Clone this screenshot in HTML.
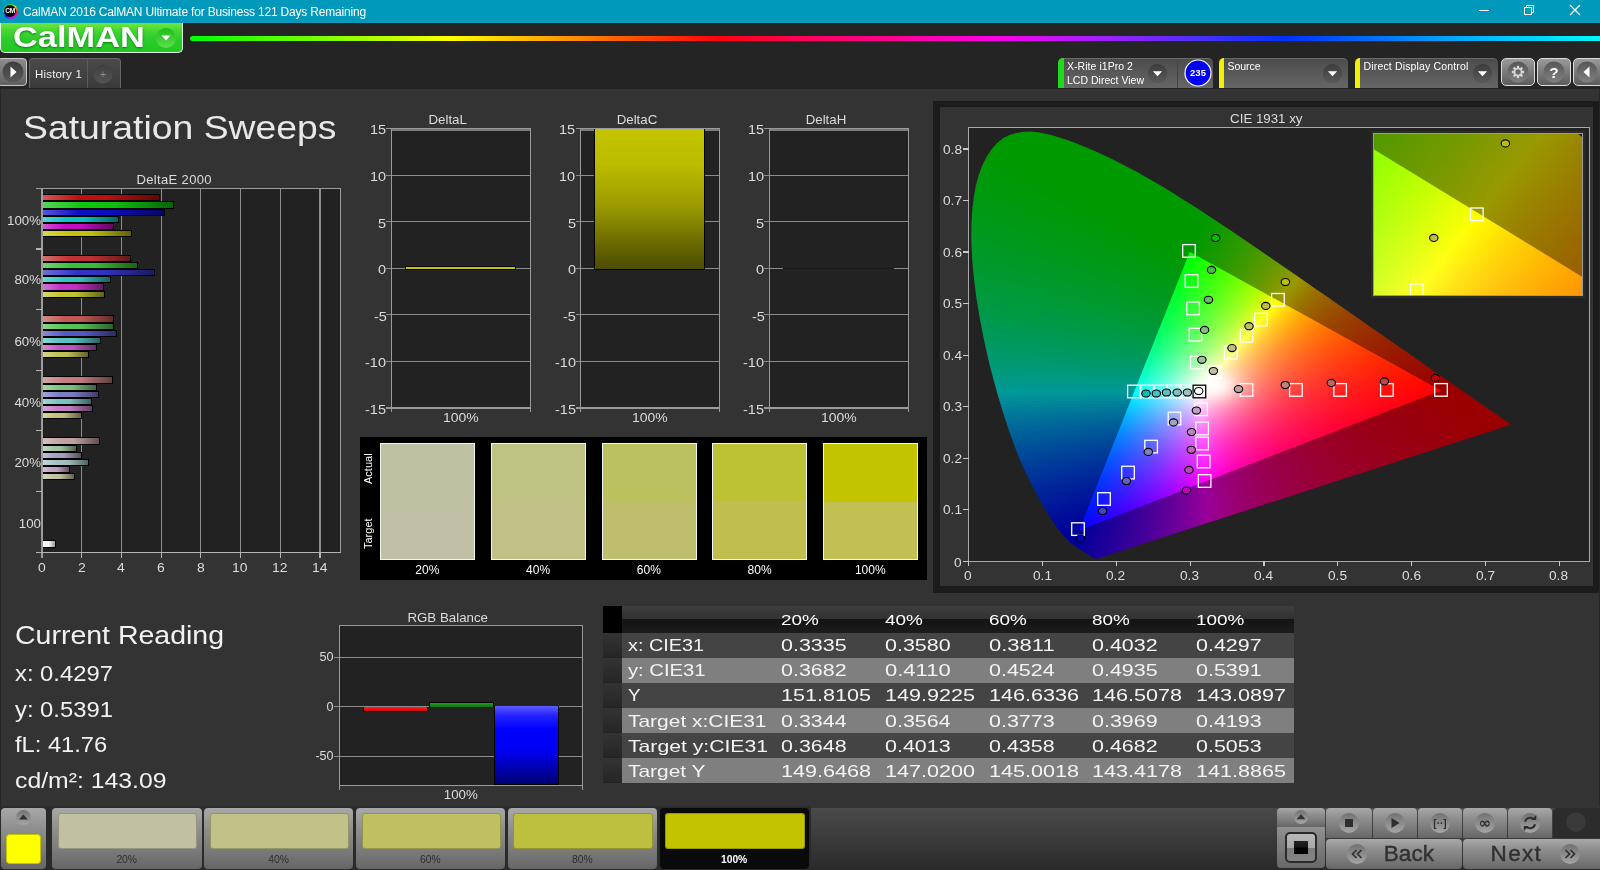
<!DOCTYPE html>
<html lang="en"><head><meta charset="utf-8"><title>CalMAN Saturation Sweeps</title>
<style>
*{box-sizing:border-box;margin:0;padding:0}
html,body{width:1600px;height:870px;overflow:hidden;background:#333}
body{position:relative;font-family:"Liberation Sans",sans-serif;color:#e6e6e6;font-size:13px}
#app{position:absolute;left:0;top:0;width:1600px;height:870px;overflow:hidden;will-change:transform}
.a{position:absolute}
.t{position:absolute;white-space:nowrap;line-height:1}
.cr{overflow:hidden}.cr i{display:block;width:100%}.r2 i{height:2px}.r3 i{height:3px}
</style></head>
<body>
<div id="app">
<!-- sec_top -->
<div class="a" style="left:0px;top:0px;width:1600px;height:23px;background:#0099bc"></div>
<div class="a" style="left:2.7px;top:3.7px;width:15.2px;height:15.2px;border-radius:50%;background:conic-gradient(from 0deg,#20e020,#e0e000 45deg,#ff2020 90deg,#ff00c0 135deg,#a020ff 180deg,#2020ff 225deg,#00d0e0 270deg,#00e060 315deg,#20e020 360deg)"></div>
<div class="a" style="left:4.2px;top:5.2px;width:12.2px;height:12.2px;border-radius:50%;background:#000"></div>
<div class="t" style="left:5.22px;top:8.21px;font-size:6.6px;color:#fff;font-weight:bold;letter-spacing:-0.3px">CM</div>
<div class="t" style="left:23.00px;top:5.64px;font-size:12px;letter-spacing:-0.189px;color:#fff;">CalMAN 2016 CalMAN Ultimate for Business 121 Days Remaining</div>
<svg class="a" style="left:1460px;top:-1px" width="140" height="23" viewBox="0 0 140 23" fill="none" stroke="#fff" stroke-width="1"><path d="M19 11.5h10"/><path d="M64.5 8.5h7v7h-7z M66.5 8.5v-2h7v7h-2"/><path d="M110 6l10 10M120 6l-10 10" stroke-width="1.2"/></svg>
<div class="a" style="left:0px;top:23px;width:1600px;height:65.8px;background:#242424"></div>
<div class="a" style="left:190px;top:35.7px;width:1410px;height:5.1px;background:linear-gradient(90deg,#00ff00 0,#a0ff00 170px,#ffff00 260px,#ff9800 372px,#ff4000 462px,#ff0010 530px,#ff0060 620px,#ff0090 700px,#ff00e8 802px,#a020ff 915px,#5030ff 1005px,#0030ff 1095px,#0060ff 1162px,#00a0ff 1252px,#00f8f8 1410px);border-radius:2.5px 0 0 2.5px"></div>
<div class="a" style="left:0px;top:23px;width:183px;height:30px;background:linear-gradient(180deg,#70e83e 0,#48d834 25%,#2ccc2c 55%,#22c822 100%);border:1px solid #e8ffe8;border-top:none;border-radius:0 0 5px 5px"></div>
<div class="t" style="left:12.60px;top:23.29px;font-size:28.6px;transform:scaleX(1.2024);transform-origin:0 0;color:#fff;font-weight:bold;text-shadow:0 1px 2px #0a7a0a">CalMAN</div>
<svg class="a" style="left:155px;top:27px" width="22" height="22" viewBox="0 0 22 22"><defs><linearGradient id="gb" x1="0" y1="0" x2="0" y2="1"><stop offset="0" stop-color="#1cbc1c"/><stop offset="1" stop-color="#5ee04a"/></linearGradient></defs><circle cx="11" cy="11" r="10" fill="url(#gb)"/><path d="M6.5 8.5h9l-4.5 5z" fill="#fff"/></svg>
<!-- sec_toolbar -->
<svg width="0" height="0" class="a"><defs><linearGradient id="ddg" x1="0" y1="0" x2="0" y2="1"><stop offset="0" stop-color="#3c3c3c"/><stop offset="1" stop-color="#5a5a5a"/></linearGradient><linearGradient id="cbg" x1="0" y1="0" x2="0" y2="1"><stop offset="0" stop-color="#565656"/><stop offset="1" stop-color="#808080"/></linearGradient><radialGradient id="btg" cx=".5" cy=".4" r=".6"><stop offset="0" stop-color="#8a8a8a"/><stop offset="1" stop-color="#5c5c5c"/></radialGradient></defs></svg>
<div class="a" style="left:-3px;top:58px;width:30px;height:28px;background:linear-gradient(180deg,#8c8c8c,#606060);border:1px solid #c8c8c8;border-radius:4px"></div>
<svg class="a" style="left:2px;top:61px" width="22" height="22" viewBox="-11 -11 22 22"><circle r="10.5" fill="url(#ddg)"/><path d="M-2.5 -5.5v11l6-5.5z" fill="#fff"/></svg>
<div class="a" style="left:29px;top:58px;width:92px;height:30px;background:linear-gradient(180deg,#4a4a4a,#3a3a3a);border:1px solid #666;border-bottom:none;border-radius:4px 4px 0 0"></div>
<div class="a" style="left:87px;top:59px;width:1px;height:29px;background:#5c5c5c"></div>
<div class="t" style="left:35.00px;top:68.77px;font-size:11.5px;letter-spacing:0.181px;color:#f0f0f0;">History 1</div>
<svg class="a" style="left:93px;top:64px" width="20" height="20" viewBox="-10 -10 20 20"><circle r="9.5" fill="url(#ddg)" opacity=".8"/></svg>
<div class="t" style="left:99.79px;top:69.19px;font-size:11px;color:#8a8a8a;">+</div>
<div class="a" style="left:1058px;top:58px;width:155px;height:30px;background:linear-gradient(180deg,#4c4c4c,#666);border-radius:5px 5px 0 0;border-top:1px solid #6a6a6a"></div>
<div class="a" style="left:1058px;top:58px;width:6px;height:30px;background:#1fdc1f;border-radius:5px 0 0 0"></div>
<div class="a" style="left:1177px;top:61px;width:1px;height:27px;background:#444"></div>
<div class="t" style="left:1067.00px;top:60.81px;font-size:10.5px;letter-spacing:0.046px;color:#fff;">X-Rite i1Pro 2</div>
<div class="t" style="left:1067.00px;top:74.81px;font-size:10.5px;letter-spacing:0.012px;color:#fff;">LCD Direct View</div>
<svg class="a" style="left:1147.0px;top:62.900000000000006px" width="21.0" height="21.0" viewBox="-10.5 -10.5 21.0 21.0"><circle r="9.5" fill="#4a4a4a"/><circle r="9.5" fill="url(#ddg)"/><path d="M-4.6 -2.2h9.2l-4.6 5z" fill="#fff"/></svg>
<svg class="a" style="left:1183px;top:58px" width="30" height="30" viewBox="-15 -15 30 30"><circle r="13" fill="#0000f0" stroke="#fff" stroke-width="1.2"/><text y="3.2" font-size="9.5" font-weight="bold" fill="#fff" text-anchor="middle" font-family="Liberation Sans, sans-serif">235</text></svg>
<div class="a" style="left:1219px;top:58px;width:129px;height:30px;background:linear-gradient(180deg,#4c4c4c,#666);border-radius:5px 5px 0 0;border-top:1px solid #6a6a6a"></div>
<div class="a" style="left:1219px;top:58px;width:5px;height:30px;background:#f0f000;border-radius:5px 0 0 0"></div>
<div class="t" style="left:1227.50px;top:60.81px;font-size:10.5px;letter-spacing:-0.045px;color:#fff;">Source</div>
<svg class="a" style="left:1322.0px;top:62.900000000000006px" width="21.0" height="21.0" viewBox="-10.5 -10.5 21.0 21.0"><circle r="9.5" fill="#4a4a4a"/><circle r="9.5" fill="url(#ddg)"/><path d="M-4.6 -2.2h9.2l-4.6 5z" fill="#fff"/></svg>
<div class="a" style="left:1355px;top:58px;width:143px;height:30px;background:linear-gradient(180deg,#4c4c4c,#666);border-radius:5px 5px 0 0;border-top:1px solid #6a6a6a"></div>
<div class="a" style="left:1355px;top:58px;width:5px;height:30px;background:#f0f000;border-radius:5px 0 0 0"></div>
<div class="t" style="left:1363.50px;top:60.81px;font-size:10.5px;letter-spacing:0.158px;color:#fff;">Direct Display Control</div>
<svg class="a" style="left:1471.5px;top:63.3px" width="21.0" height="21.0" viewBox="-10.5 -10.5 21.0 21.0"><circle r="9.5" fill="#4a4a4a"/><circle r="9.5" fill="url(#ddg)"/><path d="M-4.6 -2.2h9.2l-4.6 5z" fill="#fff"/></svg>
<div class="a" style="left:1501px;top:58px;width:34px;height:28px;background:linear-gradient(180deg,#9a9a9a,#5c5c5c);border:1px solid #dcdcdc;border-radius:5px"></div>
<div class="a" style="left:1537px;top:58px;width:34px;height:28px;background:linear-gradient(180deg,#9a9a9a,#5c5c5c);border:1px solid #dcdcdc;border-radius:5px"></div>
<div class="a" style="left:1573px;top:58px;width:34px;height:28px;background:linear-gradient(180deg,#9a9a9a,#5c5c5c);border:1px solid #dcdcdc;border-radius:5px"></div>
<svg class="a" style="left:1507px;top:61px" width="22" height="22" viewBox="-11 -11 22 22"><circle r="10.5" fill="url(#cbg)"/></svg>
<svg class="a" style="left:1543px;top:61px" width="22" height="22" viewBox="-11 -11 22 22"><circle r="10.5" fill="url(#cbg)"/></svg>
<svg class="a" style="left:1576px;top:61px" width="22" height="22" viewBox="-11 -11 22 22"><circle r="10.5" fill="url(#cbg)"/></svg>
<svg class="a" style="left:1507px;top:61px" width="22" height="22" viewBox="-11 -11 22 22"><g transform="scale(.9)"><g fill="#d8d8d8"><path d="M-1.6 -4.2L-1 -6.9H1L1.6 -4.2z" transform="rotate(0)"/><path d="M-1.6 -4.2L-1 -6.9H1L1.6 -4.2z" transform="rotate(45)"/><path d="M-1.6 -4.2L-1 -6.9H1L1.6 -4.2z" transform="rotate(90)"/><path d="M-1.6 -4.2L-1 -6.9H1L1.6 -4.2z" transform="rotate(135)"/><path d="M-1.6 -4.2L-1 -6.9H1L1.6 -4.2z" transform="rotate(180)"/><path d="M-1.6 -4.2L-1 -6.9H1L1.6 -4.2z" transform="rotate(225)"/><path d="M-1.6 -4.2L-1 -6.9H1L1.6 -4.2z" transform="rotate(270)"/><path d="M-1.6 -4.2L-1 -6.9H1L1.6 -4.2z" transform="rotate(315)"/></g><circle r="3.9" fill="none" stroke="#d8d8d8" stroke-width="1.8"/></g></svg>
<div class="t" style="left:1549.27px;top:64.98px;font-size:15.5px;color:#fff;font-weight:bold;">?</div>
<svg class="a" style="left:1576px;top:61px" width="22" height="22" viewBox="-11 -11 22 22"><path d="M2.5 -5.5v11l-6-5.5z" fill="#fff"/></svg>
<div class="a" style="left:0px;top:89px;width:1.2px;height:717px;background:#262626"></div>
<div class="a" style="left:1599px;top:89px;width:1px;height:717px;background:#262626"></div>
<!-- sec_left -->
<div class="t" style="left:23.40px;top:111.34px;font-size:33.5px;transform:scaleX(1.1149);transform-origin:0 0;color:#e8e8e8;">Saturation Sweeps</div>
<div class="t" style="left:136.45px;top:172.80px;font-size:13px;letter-spacing:0.359px;color:#dcdcdc;">DeltaE 2000</div>
<div class="a" style="left:42px;top:188px;width:299px;height:365px;background:#222"></div>
<div class="a" style="left:81.1px;top:188px;width:1.3px;height:365px;background:#8c8c8c"></div>
<div class="a" style="left:81.1px;top:553px;width:1.3px;height:5px;background:#b4b4b4"></div>
<div class="a" style="left:120.8px;top:188px;width:1.3px;height:365px;background:#8c8c8c"></div>
<div class="a" style="left:120.8px;top:553px;width:1.3px;height:5px;background:#b4b4b4"></div>
<div class="a" style="left:160.5px;top:188px;width:1.3px;height:365px;background:#8c8c8c"></div>
<div class="a" style="left:160.5px;top:553px;width:1.3px;height:5px;background:#b4b4b4"></div>
<div class="a" style="left:200.2px;top:188px;width:1.3px;height:365px;background:#8c8c8c"></div>
<div class="a" style="left:200.2px;top:553px;width:1.3px;height:5px;background:#b4b4b4"></div>
<div class="a" style="left:239.9px;top:188px;width:1.3px;height:365px;background:#8c8c8c"></div>
<div class="a" style="left:239.9px;top:553px;width:1.3px;height:5px;background:#b4b4b4"></div>
<div class="a" style="left:279.6px;top:188px;width:1.3px;height:365px;background:#8c8c8c"></div>
<div class="a" style="left:279.6px;top:553px;width:1.3px;height:5px;background:#b4b4b4"></div>
<div class="a" style="left:319.3px;top:188px;width:1.3px;height:365px;background:#8c8c8c"></div>
<div class="a" style="left:319.3px;top:553px;width:1.3px;height:5px;background:#b4b4b4"></div>
<div class="a" style="left:41px;top:188px;width:2px;height:370px;background:#9c9c9c"></div>
<div class="a" style="left:36px;top:188px;width:305px;height:1.2px;background:#9c9c9c"></div>
<div class="a" style="left:340px;top:188px;width:1.2px;height:365px;background:#9c9c9c"></div>
<div class="a" style="left:36px;top:552px;width:305px;height:1.3px;background:#b4b4b4"></div>
<div class="a" style="left:36px;top:248.4px;width:6px;height:1.3px;background:#b4b4b4"></div>
<div class="a" style="left:36px;top:309.0px;width:6px;height:1.3px;background:#b4b4b4"></div>
<div class="a" style="left:36px;top:369.6px;width:6px;height:1.3px;background:#b4b4b4"></div>
<div class="a" style="left:36px;top:430.2px;width:6px;height:1.3px;background:#b4b4b4"></div>
<div class="a" style="left:36px;top:490.8px;width:6px;height:1.3px;background:#b4b4b4"></div>
<div class="t" style="left:6.99px;top:214.00px;font-size:13.3px;color:#dcdcdc;">100%</div>
<div class="a" style="left:43px;top:194.2px;width:116.6px;height:7.3px;background:linear-gradient(90deg,#d65656 0,#c40e0e 30%,#be0e0e 55%,#620707 100%);border:1px solid #000;border-left:none"></div>
<div class="a" style="left:43px;top:201.3px;width:130.5px;height:7.3px;background:linear-gradient(90deg,#56d656 0,#0ec40e 30%,#0ebe0e 55%,#076207 100%);border:1px solid #000;border-left:none"></div>
<div class="a" style="left:43px;top:208.5px;width:121.6px;height:7.3px;background:linear-gradient(90deg,#5656d6 0,#0e0ec4 30%,#0e0ebe 55%,#070762 100%);border:1px solid #000;border-left:none"></div>
<div class="a" style="left:43px;top:215.7px;width:75.5px;height:7.3px;background:linear-gradient(90deg,#56d6d6 0,#0ec4c4 30%,#0ebebe 55%,#076262 100%);border:1px solid #000;border-left:none"></div>
<div class="a" style="left:43px;top:222.8px;width:70.6px;height:7.3px;background:linear-gradient(90deg,#d656d6 0,#c40ec4 30%,#be0ebe 55%,#620762 100%);border:1px solid #000;border-left:none"></div>
<div class="a" style="left:43px;top:229.9px;width:89.4px;height:7.3px;background:linear-gradient(90deg,#d6d656 0,#c4c40e 30%,#bebe0e 55%,#626207 100%);border:1px solid #000;border-left:none"></div>
<div class="t" style="left:14.39px;top:273.30px;font-size:13.3px;color:#dcdcdc;">80%</div>
<div class="a" style="left:43px;top:254.8px;width:87.8px;height:7.3px;background:linear-gradient(90deg,#d67070 0,#c43333 30%,#be3232 55%,#621a1a 100%);border:1px solid #000;border-left:none"></div>
<div class="a" style="left:43px;top:261.9px;width:94.8px;height:7.3px;background:linear-gradient(90deg,#70d670 0,#33c433 30%,#32be32 55%,#1a621a 100%);border:1px solid #000;border-left:none"></div>
<div class="a" style="left:43px;top:269.1px;width:111.7px;height:7.3px;background:linear-gradient(90deg,#7070d6 0,#3333c4 30%,#3232be 55%,#1a1a62 100%);border:1px solid #000;border-left:none"></div>
<div class="a" style="left:43px;top:276.2px;width:68.2px;height:7.3px;background:linear-gradient(90deg,#70d6d6 0,#33c4c4 30%,#32bebe 55%,#1a6262 100%);border:1px solid #000;border-left:none"></div>
<div class="a" style="left:43px;top:283.4px;width:60.6px;height:7.3px;background:linear-gradient(90deg,#d670d6 0,#c433c4 30%,#be32be 55%,#621a62 100%);border:1px solid #000;border-left:none"></div>
<div class="a" style="left:43px;top:290.6px;width:61.6px;height:7.3px;background:linear-gradient(90deg,#d6d670 0,#c4c433 30%,#bebe32 55%,#62621a 100%);border:1px solid #000;border-left:none"></div>
<div class="t" style="left:14.39px;top:335.20px;font-size:13.3px;color:#dcdcdc;">60%</div>
<div class="a" style="left:43px;top:315.4px;width:70.8px;height:7.3px;background:linear-gradient(90deg,#d68a8a 0,#c45858 30%,#be5656 55%,#622c2c 100%);border:1px solid #000;border-left:none"></div>
<div class="a" style="left:43px;top:322.6px;width:70.8px;height:7.3px;background:linear-gradient(90deg,#8ad68a 0,#58c458 30%,#56be56 55%,#2c622c 100%);border:1px solid #000;border-left:none"></div>
<div class="a" style="left:43px;top:329.7px;width:73.9px;height:7.3px;background:linear-gradient(90deg,#8a8ad6 0,#5858c4 30%,#5656be 55%,#2c2c62 100%);border:1px solid #000;border-left:none"></div>
<div class="a" style="left:43px;top:336.9px;width:57.9px;height:7.3px;background:linear-gradient(90deg,#8ad6d6 0,#58c4c4 30%,#56bebe 55%,#2c6262 100%);border:1px solid #000;border-left:none"></div>
<div class="a" style="left:43px;top:344.0px;width:53.9px;height:7.3px;background:linear-gradient(90deg,#d68ad6 0,#c458c4 30%,#be56be 55%,#622c62 100%);border:1px solid #000;border-left:none"></div>
<div class="a" style="left:43px;top:351.2px;width:46.1px;height:7.3px;background:linear-gradient(90deg,#d6d68a 0,#c4c458 30%,#bebe56 55%,#62622c 100%);border:1px solid #000;border-left:none"></div>
<div class="t" style="left:14.39px;top:396.20px;font-size:13.3px;color:#dcdcdc;">40%</div>
<div class="a" style="left:43px;top:376.3px;width:70.0px;height:7.3px;background:linear-gradient(90deg,#d6a5a5 0,#c47e7e 30%,#be7a7a 55%,#623f3f 100%);border:1px solid #000;border-left:none"></div>
<div class="a" style="left:43px;top:383.5px;width:53.7px;height:7.3px;background:linear-gradient(90deg,#a5d6a5 0,#7ec47e 30%,#7abe7a 55%,#3f623f 100%);border:1px solid #000;border-left:none"></div>
<div class="a" style="left:43px;top:390.6px;width:55.9px;height:7.3px;background:linear-gradient(90deg,#a5a5d6 0,#7e7ec4 30%,#7a7abe 55%,#3f3f62 100%);border:1px solid #000;border-left:none"></div>
<div class="a" style="left:43px;top:397.8px;width:48.7px;height:7.3px;background:linear-gradient(90deg,#a5d6d6 0,#7ec4c4 30%,#7abebe 55%,#3f6262 100%);border:1px solid #000;border-left:none"></div>
<div class="a" style="left:43px;top:404.9px;width:49.7px;height:7.3px;background:linear-gradient(90deg,#d6a5d6 0,#c47ec4 30%,#be7abe 55%,#623f62 100%);border:1px solid #000;border-left:none"></div>
<div class="a" style="left:43px;top:412.1px;width:38.8px;height:7.3px;background:linear-gradient(90deg,#d6d6a5 0,#c4c47e 30%,#bebe7a 55%,#62623f 100%);border:1px solid #000;border-left:none"></div>
<div class="t" style="left:14.39px;top:456.20px;font-size:13.3px;color:#dcdcdc;">20%</div>
<div class="a" style="left:43px;top:437.4px;width:56.9px;height:7.3px;background:linear-gradient(90deg,#d6bfbf 0,#c4a3a3 30%,#be9e9e 55%,#625151 100%);border:1px solid #000;border-left:none"></div>
<div class="a" style="left:43px;top:444.6px;width:34.2px;height:7.3px;background:linear-gradient(90deg,#bfd6bf 0,#a3c4a3 30%,#9ebe9e 55%,#516251 100%);border:1px solid #000;border-left:none"></div>
<div class="a" style="left:43px;top:451.7px;width:38.8px;height:7.3px;background:linear-gradient(90deg,#bfbfd6 0,#a3a3c4 30%,#9e9ebe 55%,#515162 100%);border:1px solid #000;border-left:none"></div>
<div class="a" style="left:43px;top:458.9px;width:45.9px;height:7.3px;background:linear-gradient(90deg,#bfd6d6 0,#a3c4c4 30%,#9ebebe 55%,#516262 100%);border:1px solid #000;border-left:none"></div>
<div class="a" style="left:43px;top:466.0px;width:26.5px;height:7.3px;background:linear-gradient(90deg,#d6bfd6 0,#c4a3c4 30%,#be9ebe 55%,#625162 100%);border:1px solid #000;border-left:none"></div>
<div class="a" style="left:43px;top:473.2px;width:32.1px;height:7.3px;background:linear-gradient(90deg,#d6d6bf 0,#c4c4a3 30%,#bebe9e 55%,#626251 100%);border:1px solid #000;border-left:none"></div>
<div class="t" style="left:18.81px;top:517.00px;font-size:13.3px;color:#dcdcdc;">100</div>
<div class="a" style="left:43px;top:540.4px;width:12.8px;height:7.3px;background:linear-gradient(90deg,#fff 0,#f4f4f4 50%,#9a9a9a 100%);border:1px solid #000;border-left:none"></div>
<div class="t" style="left:37.83px;top:561.94px;font-size:12px;transform:scaleX(1.1600);transform-origin:0 0;color:#dcdcdc;">0</div>
<div class="t" style="left:77.53px;top:561.94px;font-size:12px;transform:scaleX(1.1600);transform-origin:0 0;color:#dcdcdc;">2</div>
<div class="t" style="left:117.23px;top:561.94px;font-size:12px;transform:scaleX(1.1600);transform-origin:0 0;color:#dcdcdc;">4</div>
<div class="t" style="left:156.93px;top:561.94px;font-size:12px;transform:scaleX(1.1600);transform-origin:0 0;color:#dcdcdc;">6</div>
<div class="t" style="left:196.63px;top:561.94px;font-size:12px;transform:scaleX(1.1600);transform-origin:0 0;color:#dcdcdc;">8</div>
<div class="t" style="left:232.46px;top:561.94px;font-size:12px;transform:scaleX(1.1600);transform-origin:0 0;color:#dcdcdc;">10</div>
<div class="t" style="left:272.16px;top:561.94px;font-size:12px;transform:scaleX(1.1600);transform-origin:0 0;color:#dcdcdc;">12</div>
<div class="t" style="left:311.86px;top:561.94px;font-size:12px;transform:scaleX(1.1600);transform-origin:0 0;color:#dcdcdc;">14</div>
<!-- sec_delta -->
<div class="a" style="left:391.4px;top:128px;width:139px;height:280px;background:#222"></div>
<div class="a" style="left:386.4px;top:127.9px;width:144px;height:1.3px;background:#9a9a9a"></div>
<div class="t" style="left:370.28px;top:123.44px;font-size:13.3px;transform:scaleX(1.0900);transform-origin:0 0;color:#dcdcdc;">15</div>
<div class="a" style="left:386.4px;top:174.5px;width:144px;height:1.3px;background:#8c8c8c"></div>
<div class="t" style="left:370.28px;top:170.02px;font-size:13.3px;transform:scaleX(1.0900);transform-origin:0 0;color:#dcdcdc;">10</div>
<div class="a" style="left:386.4px;top:221.1px;width:144px;height:1.3px;background:#8c8c8c"></div>
<div class="t" style="left:378.34px;top:216.61px;font-size:13.3px;transform:scaleX(1.0900);transform-origin:0 0;color:#dcdcdc;">5</div>
<div class="a" style="left:386.4px;top:267.6px;width:144px;height:1.3px;background:#8c8c8c"></div>
<div class="t" style="left:378.34px;top:263.19px;font-size:13.3px;transform:scaleX(1.0900);transform-origin:0 0;color:#dcdcdc;">0</div>
<div class="a" style="left:386.4px;top:314.2px;width:144px;height:1.3px;background:#8c8c8c"></div>
<div class="t" style="left:373.51px;top:309.77px;font-size:13.3px;transform:scaleX(1.0900);transform-origin:0 0;color:#dcdcdc;">-5</div>
<div class="a" style="left:386.4px;top:360.8px;width:144px;height:1.3px;background:#8c8c8c"></div>
<div class="t" style="left:365.45px;top:356.36px;font-size:13.3px;transform:scaleX(1.0900);transform-origin:0 0;color:#dcdcdc;">-10</div>
<div class="a" style="left:386.4px;top:407.4px;width:144px;height:1.3px;background:#9a9a9a"></div>
<div class="t" style="left:365.45px;top:402.94px;font-size:13.3px;transform:scaleX(1.0900);transform-origin:0 0;color:#dcdcdc;">-15</div>
<div class="a" style="left:391.4px;top:129.2px;width:139px;height:1.8px;background:#7c7c7c"></div>
<div class="a" style="left:390.79999999999995px;top:128px;width:1.3px;height:284px;background:#9a9a9a"></div>
<div class="a" style="left:529.8px;top:128px;width:1.3px;height:284px;background:#9a9a9a"></div>
<div class="t" style="left:428.48px;top:113.14px;font-size:13.3px;color:#dcdcdc;">DeltaL</div>
<div class="t" style="left:443.05px;top:411.24px;font-size:13.3px;transform:scaleX(1.0500);transform-origin:0 0;color:#dcdcdc;">100%</div>
<div class="a" style="left:405px;top:266px;width:111px;height:4px;background:#c0c018;border:1px solid #0a0a0a"></div>
<div class="a" style="left:580.6px;top:128px;width:139px;height:280px;background:#222"></div>
<div class="a" style="left:575.6px;top:127.9px;width:144px;height:1.3px;background:#9a9a9a"></div>
<div class="t" style="left:559.48px;top:123.44px;font-size:13.3px;transform:scaleX(1.0900);transform-origin:0 0;color:#dcdcdc;">15</div>
<div class="a" style="left:575.6px;top:174.5px;width:144px;height:1.3px;background:#8c8c8c"></div>
<div class="t" style="left:559.48px;top:170.02px;font-size:13.3px;transform:scaleX(1.0900);transform-origin:0 0;color:#dcdcdc;">10</div>
<div class="a" style="left:575.6px;top:221.1px;width:144px;height:1.3px;background:#8c8c8c"></div>
<div class="t" style="left:567.54px;top:216.61px;font-size:13.3px;transform:scaleX(1.0900);transform-origin:0 0;color:#dcdcdc;">5</div>
<div class="a" style="left:575.6px;top:267.6px;width:144px;height:1.3px;background:#8c8c8c"></div>
<div class="t" style="left:567.54px;top:263.19px;font-size:13.3px;transform:scaleX(1.0900);transform-origin:0 0;color:#dcdcdc;">0</div>
<div class="a" style="left:575.6px;top:314.2px;width:144px;height:1.3px;background:#8c8c8c"></div>
<div class="t" style="left:562.71px;top:309.77px;font-size:13.3px;transform:scaleX(1.0900);transform-origin:0 0;color:#dcdcdc;">-5</div>
<div class="a" style="left:575.6px;top:360.8px;width:144px;height:1.3px;background:#8c8c8c"></div>
<div class="t" style="left:554.65px;top:356.36px;font-size:13.3px;transform:scaleX(1.0900);transform-origin:0 0;color:#dcdcdc;">-10</div>
<div class="a" style="left:575.6px;top:407.4px;width:144px;height:1.3px;background:#9a9a9a"></div>
<div class="t" style="left:554.65px;top:402.94px;font-size:13.3px;transform:scaleX(1.0900);transform-origin:0 0;color:#dcdcdc;">-15</div>
<div class="a" style="left:580.6px;top:129.2px;width:139px;height:1.8px;background:#7c7c7c"></div>
<div class="a" style="left:580.0px;top:128px;width:1.3px;height:284px;background:#9a9a9a"></div>
<div class="a" style="left:719.0px;top:128px;width:1.3px;height:284px;background:#9a9a9a"></div>
<div class="t" style="left:616.68px;top:113.14px;font-size:13.3px;color:#dcdcdc;">DeltaC</div>
<div class="t" style="left:632.25px;top:411.24px;font-size:13.3px;transform:scaleX(1.0500);transform-origin:0 0;color:#dcdcdc;">100%</div>
<div class="a" style="left:594.3px;top:128.5px;width:110.6px;height:141px;background:linear-gradient(180deg,#c3c300 0,#bcbc00 25%,#9a9a00 55%,#585800 92%,#4c4c00 100%);border:1.2px solid #000;border-top:none"></div>
<div class="a" style="left:769.4px;top:128px;width:139px;height:280px;background:#222"></div>
<div class="a" style="left:764.4px;top:127.9px;width:144px;height:1.3px;background:#9a9a9a"></div>
<div class="t" style="left:748.28px;top:123.44px;font-size:13.3px;transform:scaleX(1.0900);transform-origin:0 0;color:#dcdcdc;">15</div>
<div class="a" style="left:764.4px;top:174.5px;width:144px;height:1.3px;background:#8c8c8c"></div>
<div class="t" style="left:748.28px;top:170.02px;font-size:13.3px;transform:scaleX(1.0900);transform-origin:0 0;color:#dcdcdc;">10</div>
<div class="a" style="left:764.4px;top:221.1px;width:144px;height:1.3px;background:#8c8c8c"></div>
<div class="t" style="left:756.34px;top:216.61px;font-size:13.3px;transform:scaleX(1.0900);transform-origin:0 0;color:#dcdcdc;">5</div>
<div class="a" style="left:764.4px;top:267.6px;width:144px;height:1.3px;background:#8c8c8c"></div>
<div class="t" style="left:756.34px;top:263.19px;font-size:13.3px;transform:scaleX(1.0900);transform-origin:0 0;color:#dcdcdc;">0</div>
<div class="a" style="left:764.4px;top:314.2px;width:144px;height:1.3px;background:#8c8c8c"></div>
<div class="t" style="left:751.51px;top:309.77px;font-size:13.3px;transform:scaleX(1.0900);transform-origin:0 0;color:#dcdcdc;">-5</div>
<div class="a" style="left:764.4px;top:360.8px;width:144px;height:1.3px;background:#8c8c8c"></div>
<div class="t" style="left:743.45px;top:356.36px;font-size:13.3px;transform:scaleX(1.0900);transform-origin:0 0;color:#dcdcdc;">-10</div>
<div class="a" style="left:764.4px;top:407.4px;width:144px;height:1.3px;background:#9a9a9a"></div>
<div class="t" style="left:743.45px;top:402.94px;font-size:13.3px;transform:scaleX(1.0900);transform-origin:0 0;color:#dcdcdc;">-15</div>
<div class="a" style="left:769.4px;top:129.2px;width:139px;height:1.8px;background:#7c7c7c"></div>
<div class="a" style="left:768.8px;top:128px;width:1.3px;height:284px;background:#9a9a9a"></div>
<div class="a" style="left:907.8px;top:128px;width:1.3px;height:284px;background:#9a9a9a"></div>
<div class="t" style="left:805.68px;top:113.14px;font-size:13.3px;color:#dcdcdc;">DeltaH</div>
<div class="t" style="left:821.05px;top:411.24px;font-size:13.3px;transform:scaleX(1.0500);transform-origin:0 0;color:#dcdcdc;">100%</div>
<div class="a" style="left:783px;top:268.3px;width:111px;height:1.2px;background:#1a1a1a"></div>
<!-- sec_swatch -->
<div class="a" style="left:360px;top:437px;width:567px;height:142.5px;background:#000"></div>
<div class="a" style="left:380.0px;top:443.4px;width:95.2px;height:117px;background:linear-gradient(180deg,#bec1a2 0,#bec1a2 50.2%,#c0c0a4 50.2%,#c0c0a4 100%);border:1px solid #f4f4f4"></div>
<div class="t" style="left:415.29px;top:563.84px;font-size:12px;color:#fff;">20%</div>
<div class="a" style="left:490.8px;top:443.4px;width:95.2px;height:117px;background:linear-gradient(180deg,#bec383 0,#bec383 50.2%,#c1c086 50.2%,#c1c086 100%);border:1px solid #f4f4f4"></div>
<div class="t" style="left:526.04px;top:563.84px;font-size:12px;color:#fff;">40%</div>
<div class="a" style="left:601.5px;top:443.4px;width:95.2px;height:117px;background:linear-gradient(180deg,#bcc160 0,#bcc160 50.2%,#bfbe6c 50.2%,#bfbe6c 100%);border:1px solid #f4f4f4"></div>
<div class="t" style="left:636.79px;top:563.84px;font-size:12px;color:#fff;">60%</div>
<div class="a" style="left:712.2px;top:443.4px;width:95.2px;height:117px;background:linear-gradient(180deg,#bcc234 0,#bcc234 50.2%,#c1be50 50.2%,#c1be50 100%);border:1px solid #f4f4f4"></div>
<div class="t" style="left:747.54px;top:563.84px;font-size:12px;color:#fff;">80%</div>
<div class="a" style="left:823.0px;top:443.4px;width:95.2px;height:117px;background:linear-gradient(180deg,#c3c400 0,#c3c400 50.2%,#c2c054 50.2%,#c2c054 100%);border:1px solid #f4f4f4"></div>
<div class="t" style="left:854.95px;top:563.84px;font-size:12px;color:#fff;">100%</div>
<div class="t" style="left:362.7px;top:453px;width:12px;height:31px;font-size:11px;color:#fff;writing-mode:vertical-rl;transform:rotate(180deg)">Actual</div>
<div class="t" style="left:362.7px;top:518px;width:12px;height:31px;font-size:11px;color:#fff;writing-mode:vertical-rl;transform:rotate(180deg)">Target</div>
<!-- sec_cie -->
<div class="a" style="left:933px;top:101.2px;width:666px;height:491.6px;background:#1b1b1b"></div>
<div class="a" style="left:940px;top:107px;width:652.8px;height:479.2px;background:#333"></div>
<div class="t" style="left:1230.08px;top:111.74px;font-size:13.3px;color:#dcdcdc;">CIE 1931 xy</div>
<div class="a" style="left:968px;top:127px;width:622px;height:435px;background:#222"></div>
<div class="a cr r3" style="left:968px;top:128px;width:622px;height:434px;clip-path:polygon(129.1px 430.7px,129.0px 430.7px,129.0px 430.7px,128.9px 430.8px,128.9px 430.8px,128.8px 430.8px,128.7px 430.8px,128.6px 430.8px,128.5px 430.8px,128.4px 430.8px,128.3px 430.8px,128.1px 430.8px,128.0px 430.8px,127.8px 430.8px,127.5px 430.8px,127.3px 430.7px,127.1px 430.7px,126.9px 430.6px,126.7px 430.5px,126.5px 430.4px,126.3px 430.3px,126.0px 430.2px,125.8px 430.1px,125.5px 429.9px,125.2px 429.7px,124.9px 429.6px,124.5px 429.3px,124.2px 429.1px,123.8px 428.9px,123.3px 428.6px,122.9px 428.3px,122.4px 428.0px,121.9px 427.7px,121.4px 427.3px,120.8px 427.0px,120.2px 426.6px,119.5px 426.2px,118.7px 425.7px,117.9px 425.3px,117.1px 424.7px,116.1px 424.2px,115.2px 423.6px,114.2px 423.0px,113.1px 422.3px,112.0px 421.6px,110.8px 420.8px,109.6px 420.0px,108.2px 419.0px,106.8px 418.0px,105.4px 416.9px,103.9px 415.7px,102.3px 414.4px,100.6px 412.7px,98.7px 410.8px,96.6px 408.7px,94.5px 406.3px,92.1px 403.5px,89.7px 400.4px,87.1px 396.9px,84.4px 393.1px,81.4px 388.6px,78.3px 383.5px,75.1px 378.0px,71.6px 371.8px,67.9px 364.9px,64.0px 357.3px,59.8px 349.0px,55.5px 339.9px,51.2px 329.9px,46.9px 319.0px,42.6px 307.2px,38.3px 294.6px,34.0px 281.3px,29.8px 267.1px,25.6px 252.0px,21.5px 236.4px,17.9px 220.7px,14.5px 204.6px,11.4px 188.2px,8.7px 171.8px,6.6px 155.9px,4.9px 140.3px,3.8px 124.9px,3.2px 110.0px,3.4px 95.9px,4.2px 82.5px,5.7px 69.6px,7.9px 57.6px,10.8px 46.8px,14.4px 37.1px,18.8px 28.5px,23.8px 21.0px,29.2px 14.9px,35.1px 10.3px,41.6px 7.1px,48.4px 4.9px,55.4px 3.7px,62.5px 3.4px,69.9px 4.3px,77.4px 5.8px,84.8px 7.6px,92.3px 9.7px,99.9px 12.3px,107.4px 15.1px,114.7px 18.1px,121.9px 21.0px,129.0px 24.1px,136.0px 27.3px,143.0px 30.6px,149.8px 34.0px,156.6px 37.4px,163.3px 41.0px,170.1px 44.6px,176.8px 48.4px,183.5px 52.2px,190.1px 56.1px,196.8px 60.1px,203.4px 64.1px,210.0px 68.2px,216.6px 72.4px,223.2px 76.6px,229.8px 80.8px,236.4px 85.1px,243.0px 89.4px,249.6px 93.8px,256.2px 98.2px,262.8px 102.6px,269.4px 107.1px,276.0px 111.5px,282.6px 116.0px,289.2px 120.5px,295.8px 125.0px,302.3px 129.5px,308.9px 134.0px,315.4px 138.5px,322.0px 143.0px,328.5px 147.5px,334.9px 152.0px,341.4px 156.4px,347.8px 160.9px,354.1px 165.3px,360.4px 169.6px,366.6px 174.0px,372.8px 178.3px,379.0px 182.6px,385.1px 186.8px,391.1px 191.0px,397.0px 195.1px,402.8px 199.2px,408.6px 203.2px,414.3px 207.1px,419.8px 211.0px,425.3px 214.7px,430.6px 218.4px,435.8px 222.1px,440.9px 225.6px,445.7px 229.0px,450.4px 232.3px,454.9px 235.4px,459.3px 238.4px,463.5px 241.4px,467.7px 244.2px,471.7px 247.0px,475.5px 249.7px,479.2px 252.2px,482.7px 254.7px,486.0px 256.9px,489.2px 259.1px,492.2px 261.2px,495.1px 263.2px,497.8px 265.1px,500.3px 266.9px,502.8px 268.6px,505.0px 270.2px,507.2px 271.7px,509.2px 273.1px,511.2px 274.4px,513.0px 275.7px,514.7px 276.9px,516.3px 278.0px,517.9px 279.1px,519.4px 280.1px,520.7px 281.1px,522.0px 282.0px,523.3px 282.8px,524.5px 283.7px,525.6px 284.5px,526.7px 285.3px,527.8px 286.0px,528.8px 286.7px,529.7px 287.3px,530.6px 288.0px,531.5px 288.6px,532.3px 289.1px,533.1px 289.6px,533.8px 290.1px,534.4px 290.6px,535.1px 291.0px,535.6px 291.4px,536.2px 291.8px,536.7px 292.1px,537.1px 292.5px,537.6px 292.8px,538.0px 293.0px,538.3px 293.3px,538.6px 293.5px,538.9px 293.7px,539.1px 293.9px,539.6px 294.2px,540.4px 294.7px,541.4px 295.4px,542.4px 296.1px,543.1px 296.6px)"><i></i><i style="background:linear-gradient(90deg,#009900 43.5px,#009900 81.5px)"></i><i style="background:linear-gradient(90deg,#009900 35.5px,#009900 92.5px)"></i><i style="background:linear-gradient(90deg,#009900 30.5px,#009900 102.5px)"></i><i style="background:linear-gradient(90deg,#009900 27.5px,#009900 109.5px)"></i><i style="background:linear-gradient(90deg,#009900 24.5px,#009900 117.5px)"></i><i style="background:linear-gradient(90deg,#009902 21.5px,#009900 124.5px)"></i><i style="background:linear-gradient(90deg,#009903 19.5px,#009900 35.5px,#009900 131.5px)"></i><i style="background:linear-gradient(90deg,#009904 17.5px,#009900 41.5px,#009900 138.5px)"></i><i style="background:linear-gradient(90deg,#009905 16.5px,#009900 46.5px,#009900 144.5px)"></i><i style="background:linear-gradient(90deg,#009906 14.5px,#009900 51.5px,#009900 150.5px)"></i><i style="background:linear-gradient(90deg,#009907 12.5px,#009900 57.5px,#009900 156.5px)"></i><i style="background:linear-gradient(90deg,#009908 11.5px,#009900 62.5px,#009900 162.5px)"></i><i style="background:linear-gradient(90deg,#009909 10.5px,#009900 68.5px,#009900 168.5px)"></i><i style="background:linear-gradient(90deg,#00990a 9.5px,#009900 73.5px,#009900 173.5px)"></i><i style="background:linear-gradient(90deg,#00990b 8.5px,#009900 79.5px,#009900 179.5px)"></i><i style="background:linear-gradient(90deg,#00990c 7.5px,#009900 84.5px,#009900 184.5px)"></i><i style="background:linear-gradient(90deg,#00990d 6.5px,#009900 90.5px,#009900 189.5px)"></i><i style="background:linear-gradient(90deg,#00990e 6.5px,#009900 95.5px,#009900 194.5px)"></i><i style="background:linear-gradient(90deg,#00990f 5.5px,#009900 101.5px,#009900 199.5px)"></i><i style="background:linear-gradient(90deg,#009910 4.5px,#009900 106.5px,#009900 204.5px)"></i><i style="background:linear-gradient(90deg,#009911 4.5px,#009900 111.5px,#009900 209.5px)"></i><i style="background:linear-gradient(90deg,#009912 3.5px,#009900 117.5px,#009900 214.5px)"></i><i style="background:linear-gradient(90deg,#009913 3.5px,#009900 122.5px,#009900 219.5px)"></i><i style="background:linear-gradient(90deg,#009914 3.5px,#009900 128.5px,#009900 223.5px)"></i><i style="background:linear-gradient(90deg,#009915 2.5px,#009900 133.5px,#009900 228.5px)"></i><i style="background:linear-gradient(90deg,#009916 2.5px,#009900 139.5px,#009900 233.5px)"></i><i style="background:linear-gradient(90deg,#009917 2.5px,#009900 144.5px,#009900 237.5px)"></i><i style="background:linear-gradient(90deg,#009918 1.5px,#009900 150.5px,#009900 237.5px,#049900 242.5px)"></i><i style="background:linear-gradient(90deg,#00991a 1.5px,#009900 155.5px,#009900 236.5px,#099900 246.5px)"></i><i style="background:linear-gradient(90deg,#00991b 1.5px,#009900 161.5px,#009900 235.5px,#0e9900 251.5px)"></i><i style="background:linear-gradient(90deg,#00991c 1.5px,#009900 166.5px,#009900 233.5px,#139900 255.5px)"></i><i style="background:linear-gradient(90deg,#00991d 1.5px,#00990e 102.5px,#009900 172.5px,#009900 232.5px,#189900 260.5px)"></i><i style="background:linear-gradient(90deg,#00991e 1.5px,#009910 97.5px,#009900 177.5px,#009900 231.5px,#1e9900 264.5px)"></i><i style="background:linear-gradient(90deg,#00991f 1.5px,#009910 104.5px,#009900 182.5px,#009900 230.5px,#249900 269.5px)"></i><i style="background:linear-gradient(90deg,#009921 1.5px,#009910 111.5px,#009900 188.5px,#009900 229.5px,#299900 273.5px)"></i><i style="background:linear-gradient(90deg,#009922 1.5px,#009911 112.5px,#009900 193.5px,#009900 227.5px,#309900 278.5px)"></i><i style="background:linear-gradient(90deg,#009923 1.5px,#009913 108.5px,#009900 199.5px,#009900 226.5px,#369900 282.5px)"></i><i style="background:linear-gradient(90deg,#009924 1.5px,#009915 104.5px,#009900 204.5px,#009900 225.5px,#3e9900 287.5px)"></i><i style="background:linear-gradient(90deg,#009926 1.5px,#009914 117.5px,#009900 210.5px,#009900 224.5px,#449900 291.5px)"></i><i style="background:linear-gradient(90deg,#009927 1.5px,#009918 102.5px,#009900 223.5px,#269900 262.5px,#4b9900 295.5px)"></i><i style="background:linear-gradient(90deg,#009928 1.5px,#009916 121.5px,#009900 221.5px,#2c9900 266.5px,#539900 300.5px)"></i><i style="background:linear-gradient(90deg,#00992a 1.5px,#009915 134.5px,#009902 220.5px,#309900 268.5px,#5b9900 304.5px)"></i><i style="background:linear-gradient(90deg,#00992b 2.5px,#00991b 109.5px,#009904 219.5px,#0d9900 232.5px,#329900 268.5px,#639900 308.5px)"></i><i style="background:linear-gradient(90deg,#00992c 2.5px,#00991d 106.5px,#009905 218.5px,#139900 237.5px,#2c9900 261.5px,#6c9900 313.5px)"></i><i style="background:linear-gradient(90deg,#00992e 2.5px,#00991c 120.5px,#009907 217.5px,#1a9900 242.5px,#3d9900 274.5px,#759900 317.5px)"></i><i style="background:linear-gradient(90deg,#00992f 2.5px,#009920 106.5px,#009909 215.5px,#229900 248.5px,#3e9900 273.5px,#639900 302.5px,#809900 322.5px)"></i><i style="background:linear-gradient(90deg,#009931 3.5px,#009920 115.5px,#00990b 214.5px,#299900 253.5px,#449900 276.5px,#899900 326.5px)"></i><i style="background:linear-gradient(90deg,#009932 3.5px,#009923 107.5px,#00990d 213.5px,#329900 259.5px,#499900 278.5px,#939900 330.5px)"></i><i style="background:linear-gradient(90deg,#009934 3.5px,#009922 122.5px,#00990f 212.5px,#3a9900 264.5px,#689900 299.5px,#999900 331.5px,#999200 335.5px)"></i><i style="background:linear-gradient(90deg,#009935 3.5px,#009926 109.5px,#009910 211.5px,#259908 245.5px,#459900 271.5px,#779900 307.5px,#999900 328.5px,#998900 339.5px)"></i><i style="background:linear-gradient(90deg,#009937 4.5px,#009927 113.5px,#009913 209.5px,#19990d 233.5px,#419903 266.5px,#4d9900 275.5px,#709900 300.5px,#989900 325.5px,#998000 343.5px)"></i><i style="background:linear-gradient(90deg,#009939 4.5px,#00992a 106.5px,#009915 208.5px,#1c990e 234.5px,#469904 268.5px,#589900 281.5px,#999900 323.5px,#997600 348.5px)"></i><i style="background:linear-gradient(90deg,#00993a 4.5px,#009929 122.5px,#009917 207.5px,#20990f 236.5px,#4a9906 269.5px,#629900 286.5px,#989900 320.5px,#997c00 340.5px,#996f00 352.5px)"></i><i style="background:linear-gradient(90deg,#00993c 5.5px,#00992e 104.5px,#009919 206.5px,#289910 241.5px,#4a9908 267.5px,#6f9900 292.5px,#989900 317.5px,#997b00 338.5px,#996800 356.5px)"></i><i style="background:linear-gradient(90deg,#00993e 5.5px,#00992e 115.5px,#00991b 205.5px,#43990c 260.5px,#7a9900 297.5px,#999900 315.5px,#997500 340.5px,#996000 361.5px)"></i><i style="background:linear-gradient(90deg,#00993f 6.5px,#009932 103.5px,#00991e 203.5px,#1c9917 228.5px,#47990e 261.5px,#889900 303.5px,#999800 313.5px,#997400 338.5px,#995a00 365.5px)"></i><i style="background:linear-gradient(90deg,#009941 6.5px,#009930 126.5px,#009920 202.5px,#14991c 220.5px,#479911 259.5px,#6e9909 285.5px,#999900 310.5px,#997400 335.5px,#995400 369.5px)"></i><i style="background:linear-gradient(90deg,#009943 7.5px,#009933 121.5px,#009922 201.5px,#21991b 229.5px,#449914 255.5px,#68990d 279.5px,#999802 308.5px,#997d00 325.5px,#996b00 340.5px,#994f00 373.5px)"></i><i style="background:linear-gradient(90deg,#009945 7.5px,#00993a 91.5px,#009925 200.5px,#419918 251.5px,#6a990f 278.5px,#999906 305.5px,#998000 320.5px,#996b00 337.5px,#995800 357.5px,#994900 378.5px)"></i><i style="background:linear-gradient(90deg,#009947 8.5px,#009935 134.5px,#009927 199.5px,#3b991c 245.5px,#649913 272.5px,#999909 302.5px,#997f02 318.5px,#996b00 334.5px,#995700 355.5px,#994400 382.5px)"></i><i style="background:linear-gradient(90deg,#009949 8.5px,#00993c 106.5px,#00992a 197.5px,#1e9924 222.5px,#45991d 250.5px,#759913 280.5px,#99980c 300.5px,#997b04 318.5px,#996c00 330.5px,#995200 358.5px,#994000 386.5px)"></i><i style="background:linear-gradient(90deg,#00994b 9.5px,#00993d 114.5px,#00992d 196.5px,#249926 225.5px,#4b991e 252.5px,#6d9918 273.5px,#999910 297.5px,#99840a 309.5px,#996c03 327.5px,#996400 335.5px,#995000 357.5px,#993b00 391.5px)"></i><i style="background:linear-gradient(90deg,#00994d 9.5px,#009940 110.5px,#00992f 195.5px,#1a992b 216.5px,#4b9922 250.5px,#999813 295.5px,#99860e 305.5px,#997207 319.5px,#995700 345.5px,#994400 371.5px,#993700 395.5px)"></i><i style="background:linear-gradient(90deg,#00994f 10.5px,#009943 106.5px,#009932 194.5px,#409927 241.5px,#679920 265.5px,#999917 292.5px,#997d0e 308.5px,#995f04 333.5px,#994b00 357.5px,#993300 399.5px)"></i><i style="background:linear-gradient(90deg,#009951 10.5px,#009946 103.5px,#009935 193.5px,#43992a 241.5px,#699923 264.5px,#98991b 289.5px,#997910 308.5px,#995b05 334.5px,#994500 362.5px,#992f00 404.5px)"></i><i style="background:linear-gradient(90deg,#009954 11.5px,#009947 113.5px,#009938 191.5px,#189934 210.5px,#46992c 241.5px,#6f9926 265.5px,#98991f 286.5px,#997511 308.5px,#995706 335.5px,#994700 356.5px,#993f00 368.5px,#992c00 408.5px)"></i><i style="background:linear-gradient(90deg,#009956 11.5px,#00994b 104.5px,#00993b 190.5px,#1a9937 210.5px,#419931 236.5px,#6a992a 260.5px,#999923 284.5px,#997515 305.5px,#995508 334.5px,#994100 361.5px,#992900 412.5px)"></i><i style="background:linear-gradient(90deg,#009958 12.5px,#00994e 102.5px,#00993f 189.5px,#1f993a 212.5px,#499933 239.5px,#6e992d 260.5px,#989927 281.5px,#997116 305.5px,#99520a 334.5px,#993c00 367.5px,#992500 417.5px)"></i><i style="background:linear-gradient(90deg,#00995b 12.5px,#009952 93.5px,#009942 188.5px,#1a993e 207.5px,#499937 237.5px,#699932 255.5px,#99992b 279.5px,#998522 289.5px,#99741b 300.5px,#995e12 318.5px,#99500c 333.5px,#993700 372.5px,#992200 421.5px)"></i><i style="background:linear-gradient(90deg,#00995d 13.5px,#009954 99.5px,#009945 187.5px,#2d993f 218.5px,#49993b 235.5px,#719935 257.5px,#98992f 276.5px,#99741f 297.5px,#996015 313.5px,#994e0d 332.5px,#993d06 356.5px,#993200 377.5px,#992000 425.5px)"></i><i style="background:linear-gradient(90deg,#009960 14.5px,#009954 121.5px,#009949 185.5px,#149946 200.5px,#429940 229.5px,#66993b 249.5px,#989934 273.5px,#997f27 287.5px,#99681c 303.5px,#99480d 336.5px,#992d00 383.5px,#991d00 430.5px)"></i><i style="background:linear-gradient(90deg,#009963 14.5px,#009959 107.5px,#00994d 184.5px,#249948 209.5px,#479943 230.5px,#999938 271.5px,#99812c 283.5px,#996820 300.5px,#99460f 335.5px,#993506 362.5px,#992900 388.5px,#991a00 434.5px)"></i><i style="background:linear-gradient(90deg,#009965 15.5px,#00995e 92.5px,#009950 183.5px,#1d994d 203.5px,#459948 227.5px,#779941 253.5px,#98993d 268.5px,#998533 278.5px,#997028 291.5px,#995c1d 307.5px,#994b14 325.5px,#993509 358.5px,#992600 393.5px,#991800 438.5px)"></i><i style="background:linear-gradient(90deg,#009968 16.5px,#009960 102.5px,#009954 182.5px,#219950 204.5px,#45994c 225.5px,#7c9945 253.5px,#999942 266.5px,#998034 278.5px,#996928 293.5px,#994e19 318.5px,#994011 336.5px,#992c06 372.5px,#992200 399.5px,#991500 443.5px)"></i><i style="background:linear-gradient(90deg,#00996b 16.5px,#009962 114.5px,#009958 181.5px,#439951 222.5px,#70994c 245.5px,#989947 263.5px,#997d37 277.5px,#996529 293.5px,#994b1a 318.5px,#994115 331.5px,#992a07 372.5px,#991e00 404.5px,#991300 447.5px)"></i><i style="background:linear-gradient(90deg,#00996e 17.5px,#009966 110.5px,#00995c 179.5px,#19995a 196.5px,#3f9956 218.5px,#669952 238.5px,#97994d 260.5px,#997839 277.5px,#99652d 290.5px,#994f20 310.5px,#993f16 330.5px,#992d0b 361.5px,#991b00 409.5px,#991100 451.5px)"></i><i style="background:linear-gradient(90deg,#009971 18.5px,#009961 178.5px,#24995d 201.5px,#509959 225.5px,#6f9956 240.5px,#999952 258.5px,#997a3e 273.5px,#99612f 290.5px,#994b21 311.5px,#993d18 329.5px,#992a0c 363.5px,#991a01 409.5px,#990f00 455.5px)"></i><i style="background:linear-gradient(90deg,#009974 18.5px,#00996e 104.5px,#009965 177.5px,#379960 210.5px,#67995c 234.5px,#989958 255.5px,#997c45 269.5px,#996233 286.5px,#995028 302.5px,#993b1a 328.5px,#99280d 363.5px,#991701 414.5px,#990c00 460.5px)"></i><i style="background:linear-gradient(90deg,#009978 19.5px,#00996a 176.5px,#189968 191.5px,#469964 216.5px,#6c9961 234.5px,#99995d 253.5px,#997e4b 265.5px,#99663a 280.5px,#995730 292.5px,#993e1f 320.5px,#992b12 352.5px,#991d07 389.5px,#991300 425.5px,#990a00 464.5px)"></i><i style="background:linear-gradient(90deg,#00997b 20.5px,#00996f 175.5px,#29996c 199.5px,#4c9969 217.5px,#999762 251.5px,#99774b 266.5px,#995f3a 282.5px,#994628 306.5px,#99361c 328.5px,#992812 354.5px,#991806 398.5px,#991000 431.5px,#990900 468.5px)"></i><i style="background:linear-gradient(90deg,#00997f 21.5px,#009974 173.5px,#219971 193.5px,#4c996f 215.5px,#999869 248.5px,#997952 262.5px,#99603f 278.5px,#99482d 300.5px,#99341e 327.5px,#992311 361.5px,#991707 398.5px,#990d00 436.5px,#990700 473.5px)"></i><i style="background:linear-gradient(90deg,#009982 22.5px,#009979 172.5px,#229977 192.5px,#4c9975 213.5px,#709973 229.5px,#999970 245.5px,#997252 263.5px,#995c40 278.5px,#99442e 301.5px,#993421 323.5px,#992112 361.5px,#991306 407.5px,#990b00 441.5px,#990500 477.5px)"></i><i style="background:linear-gradient(90deg,#009986 22.5px,#00997e 171.5px,#16997d 184.5px,#3d997b 204.5px,#6c9979 225.5px,#999776 243.5px,#997459 259.5px,#995943 277.5px,#994632 296.5px,#993223 322.5px,#991e12 364.5px,#991308 402.5px,#990900 447.5px,#990300 481.5px)"></i><i style="background:linear-gradient(90deg,#00998a 23.5px,#009984 170.5px,#419981 204.5px,#6f9980 224.5px,#99997e 240.5px,#99826b 249.5px,#99745f 256.5px,#995a48 273.5px,#994133 297.5px,#993226 318.5px,#992218 349.5px,#99120a 397.5px,#990700 452.5px,#990200 486.5px)"></i><i style="background:linear-gradient(90deg,#00998e 24.5px,#009989 169.5px,#459988 204.5px,#999784 238.5px,#997868 251.5px,#995b4e 269.5px,#994339 291.5px,#992d25 322.5px,#991b15 362.5px,#99100a 401.5px,#990500 457.5px,#990000 490.5px)"></i><i style="background:linear-gradient(90deg,#009992 25.5px,#009990 167.5px,#0f998f 176.5px,#3c998f 198.5px,#73998e 221.5px,#99988c 235.5px,#998379 243.5px,#99756b 250.5px,#995851 268.5px,#99443d 287.5px,#992e29 316.5px,#991e1a 349.5px,#99110d 392.5px,#990300 463.5px,#990000 494.5px)"></i><i style="background:linear-gradient(90deg,#009996 26.5px,#009996 166.5px,#289996 187.5px,#479996 201.5px,#6c9996 216.5px,#999995 232.5px,#997f7c 242.5px,#996d6b 251.5px,#995553 267.5px,#99413f 286.5px,#992c2b 315.5px,#991c1b 349.5px,#990e0d 396.5px,#990100 468.5px,#990000 499.5px)"></i><i style="background:linear-gradient(90deg,#009799 26.5px,#009699 165.5px,#229599 183.5px,#459599 199.5px,#749599 218.5px,#999499 231.5px,#997b7f 241.5px,#996c6f 249.5px,#995154 267.5px,#993b3e 289.5px,#992729 320.5px,#991b1c 349.5px,#990a0c 406.5px,#990002 464.5px,#990000 503.5px)"></i><i style="background:linear-gradient(90deg,#009399 27.5px,#008f99 164.5px,#468e99 199.5px,#8a8d99 226.5px,#998a97 232.5px,#997580 241.5px,#996670 249.5px,#994c54 268.5px,#993239 297.5px,#992328 324.5px,#991217 368.5px,#99060a 419.5px,#990004 456.5px,#990000 479.5px,#990000 507.5px)"></i><i style="background:linear-gradient(90deg,#008e99 28.5px,#008999 163.5px,#458799 198.5px,#638699 211.5px,#998397 232.5px,#997183 240.5px,#996171 249.5px,#994b59 265.5px,#993540 289.5px,#99252e 315.5px,#99131a 360.5px,#99070e 407.5px,#990006 448.5px,#990000 484.5px,#990000 512.5px)"></i><i style="background:linear-gradient(90deg,#008a99 29.5px,#008399 161.5px,#218299 180.5px,#468199 198.5px,#667f99 212.5px,#997c98 232.5px,#996b84 240.5px,#995c72 249.5px,#994355 269.5px,#993342 288.5px,#99222e 317.5px,#99111b 360.5px,#99040c 416.5px,#990008 441.5px,#990000 489.5px,#990000 516.5px)"></i><i style="background:linear-gradient(90deg,#008699 30.5px,#007e99 160.5px,#1b7c99 176.5px,#477a99 198.5px,#707899 216.5px,#997699 232.5px,#996887 239.5px,#995773 249.5px,#99445b 265.5px,#993144 287.5px,#991f2f 317.5px,#990c18 372.5px,#99010b 426.5px,#990000 495.5px,#990000 520.5px)"></i><i style="background:linear-gradient(90deg,#008299 31.5px,#007899 159.5px,#197799 174.5px,#4a7499 199.5px,#757199 218.5px,#996f99 232.5px,#995274 249.5px,#993f5b 266.5px,#992a41 292.5px,#991c2f 319.5px,#990a18 375.5px,#99000c 425.5px,#990000 500.5px,#990000 525.5px)"></i><i style="background:linear-gradient(90deg,#007e99 32.5px,#007399 158.5px,#227199 178.5px,#4d6e99 200.5px,#996797 233.5px,#994e75 249.5px,#993756 271.5px,#992842 292.5px,#991a30 319.5px,#990e20 354.5px,#99000f 417.5px,#990002 489.5px,#990000 529.5px)"></i><i style="background:linear-gradient(90deg,#007a99 33.5px,#006e99 157.5px,#276b99 180.5px,#526899 202.5px,#996198 233.5px,#995687 240.5px,#994874 250.5px,#993357 271.5px,#992340 296.5px,#991831 319.5px,#990a1e 362.5px,#990011 410.5px,#990003 487.5px,#990000 533.5px)"></i><i style="background:linear-gradient(90deg,#007699 34.5px,#006999 156.5px,#396599 189.5px,#686099 212.5px,#995c98 233.5px,#994475 250.5px,#993058 271.5px,#991e3e 300.5px,#990f28 339.5px,#990014 402.5px,#990005 477.5px,#990000 538.5px)"></i><i style="background:linear-gradient(90deg,#007299 35.5px,#006599 154.5px,#3c5f99 190.5px,#625c99 209.5px,#995699 233.5px,#99437b 247.5px,#992d59 271.5px,#991b3f 300.5px,#990d29 339.5px,#990016 394.5px,#990006 475.5px,#990000 542.5px)"></i><i style="background:linear-gradient(90deg,#006e99 36.5px,#006099 153.5px,#155e99 167.5px,#3d5a99 190.5px,#6d5599 214.5px,#995199 233.5px,#993a75 251.5px,#99295a 271.5px,#991940 300.5px,#990b29 341.5px,#990019 386.5px,#990011 418.5px,#990004 494.5px,#990000 546.5px)"></i><i style="background:linear-gradient(90deg,#006a99 37.5px,#005c99 152.5px,#3e5599 190.5px,#695099 212.5px,#994a97 234.5px,#993879 249.5px,#99265b 271.5px,#991741 300.5px,#990829 343.5px,#99001c 379.5px,#990010 426.5px,#990005 491.5px,#990000 544.5px)"></i><i style="background:linear-gradient(90deg,#006799 38.5px,#005899 151.5px,#255399 175.5px,#4a4f99 196.5px,#994598 234.5px,#993275 252.5px,#99245d 270.5px,#991645 296.5px,#990b32 326.5px,#990020 371.5px,#990013 416.5px,#990008 475.5px,#990001 535.5px)"></i><i style="background:linear-gradient(90deg,#006399 39.5px,#005499 150.5px,#284f99 176.5px,#494b99 195.5px,#744599 217.5px,#994098 234.5px,#993079 250.5px,#99215e 270.5px,#991549 292.5px,#990a34 324.5px,#990023 363.5px,#990013 419.5px,#990002 526.5px)"></i><i style="background:linear-gradient(90deg,#006099 40.5px,#005099 148.5px,#1e4c99 169.5px,#484699 194.5px,#6e4299 214.5px,#993c99 234.5px,#992e7d 248.5px,#991e60 269.5px,#99134a 292.5px,#990836 322.5px,#990027 356.5px,#99001a 394.5px,#99000e 447.5px,#990004 517.5px)"></i><i style="background:linear-gradient(90deg,#005c99 41.5px,#004c99 147.5px,#244799 172.5px,#474299 193.5px,#993799 234.5px,#992779 251.5px,#991c62 268.5px,#99134f 287.5px,#990738 320.5px,#99002b 348.5px,#99001a 397.5px,#99000c 462.5px,#990006 507.5px)"></i><i style="background:linear-gradient(90deg,#005999 42.5px,#004999 146.5px,#413f99 189.5px,#633a99 208.5px,#993297 235.5px,#99257d 249.5px,#991a64 267.5px,#990e4b 293.5px,#99063a 318.5px,#99002f 340.5px,#99001b 396.5px,#99000f 449.5px,#990008 498.5px)"></i><i style="background:linear-gradient(90deg,#005699 43.5px,#004599 145.5px,#283f99 173.5px,#4c3a99 195.5px,#992e98 235.5px,#99217c 250.5px,#991766 266.5px,#990a48 298.5px,#990237 325.5px,#99002a 353.5px,#99001c 395.5px,#990009 489.5px)"></i><i style="background:linear-gradient(90deg,#005299 44.5px,#004199 144.5px,#283b99 172.5px,#4b3699 194.5px,#6f3099 214.5px,#992998 235.5px,#991d7b 251.5px,#99115f 273.5px,#99094c 294.5px,#99023d 316.5px,#99002d 348.5px,#990020 384.5px,#99000b 480.5px)"></i><i style="background:linear-gradient(90deg,#004f99 45.5px,#003e99 142.5px,#133b99 157.5px,#3d3499 185.5px,#662e99 209.5px,#992599 235.5px,#991c82 247.5px,#990f62 271.5px,#990850 290.5px,#99013f 314.5px,#99002f 345.5px,#990021 383.5px,#99000e 470.5px)"></i><i style="background:linear-gradient(90deg,#004c99 46.5px,#003b99 141.5px,#1a3799 161.5px,#413099 187.5px,#6a2999 211.5px,#992199 235.5px,#991881 248.5px,#990e65 269.5px,#990550 291.5px,#990043 309.5px,#990033 338.5px,#990025 373.5px,#990018 419.5px,#990010 461.5px)"></i><i style="background:linear-gradient(90deg,#004999 48.5px,#003899 140.5px,#1e3399 163.5px,#452c99 189.5px,#6c2599 212.5px,#991d98 236.5px,#99137d 251.5px,#990c68 267.5px,#99024f 294.5px,#990042 312.5px,#990029 364.5px,#99001d 402.5px,#990012 452.5px)"></i><i style="background:linear-gradient(90deg,#004699 49.5px,#003599 139.5px,#222f99 165.5px,#492899 191.5px,#6e2199 213.5px,#991998 236.5px,#991284 247.5px,#99096a 266.5px,#990050 294.5px,#990044 310.5px,#990029 366.5px,#990015 442.5px)"></i><i style="background:linear-gradient(90deg,#004399 50.5px,#003299 138.5px,#1f2c99 162.5px,#452599 188.5px,#691f99 210.5px,#991698 236.5px,#990c7a 254.5px,#990463 273.5px,#990057 286.5px,#990043 313.5px,#99002c 360.5px,#990017 433.5px)"></i><i style="background:linear-gradient(90deg,#004099 51.5px,#002f99 137.5px,#232899 164.5px,#4f2099 194.5px,#791899 219.5px,#991299 236.5px,#990c85 247.5px,#99056f 263.5px,#99005f 278.5px,#99004b 302.5px,#990030 352.5px,#99001a 424.5px)"></i><i style="background:linear-gradient(90deg,#003c99 53.5px,#002c99 135.5px,#242599 164.5px,#4b1e99 191.5px,#6d1799 212.5px,#990f99 236.5px,#990881 250.5px,#99016b 267.5px,#99005a 284.5px,#990049 306.5px,#990032 349.5px,#99001d 415.5px)"></i><i style="background:linear-gradient(90deg,#003a99 54.5px,#002a99 134.5px,#371e99 177.5px,#601699 204.5px,#990b98 237.5px,#99088b 244.5px,#99006e 265.5px,#99004e 300.5px,#990035 344.5px,#990020 405.5px)"></i><i style="background:linear-gradient(90deg,#003799 55.5px,#002799 133.5px,#3f1a99 182.5px,#6f1099 213.5px,#990898 237.5px,#99007c 255.5px,#990071 263.5px,#990051 297.5px,#990038 339.5px,#990023 396.5px)"></i><i style="background:linear-gradient(90deg,#003499 57.5px,#002499 132.5px,#221d99 160.5px,#471599 187.5px,#6c0e99 211.5px,#990498 237.5px,#990088 247.5px,#990074 261.5px,#990054 294.5px,#990045 316.5px,#990036 345.5px,#990027 387.5px)"></i><i style="background:linear-gradient(90deg,#003199 58.5px,#002299 131.5px,#231a99 160.5px,#4c1299 190.5px,#710a99 214.5px,#990199 237.5px,#99007f 253.5px,#990070 265.5px,#990054 295.5px,#99003f 328.5px,#99002a 378.5px)"></i><i style="background:linear-gradient(90deg,#002e99 60.5px,#001f99 129.5px,#1a1a99 152.5px,#441199 184.5px,#6e0799 212.5px,#990099 237.5px,#990079 258.5px,#990057 292.5px,#990043 322.5px,#99002f 368.5px)"></i><i style="background:linear-gradient(90deg,#002b99 61.5px,#001d99 128.5px,#201699 156.5px,#420e99 182.5px,#820099 224.5px,#990098 238.5px,#990076 261.5px,#99005b 288.5px,#990046 318.5px,#990033 359.5px)"></i><i style="background:linear-gradient(90deg,#002999 63.5px,#001b99 127.5px,#211399 156.5px,#440b99 183.5px,#750099 216.5px,#990098 238.5px,#990079 259.5px,#990060 283.5px,#99004b 311.5px,#990037 350.5px)"></i><i style="background:linear-gradient(90deg,#002699 64.5px,#001899 126.5px,#221099 156.5px,#460899 184.5px,#690099 208.5px,#980099 237.5px,#99007c 257.5px,#99005e 286.5px,#99004d 309.5px,#99003c 341.5px)"></i><i style="background:linear-gradient(90deg,#002399 66.5px,#001699 125.5px,#230e99 156.5px,#480599 185.5px,#5f0099 201.5px,#990099 238.5px,#99007e 256.5px,#990064 280.5px,#99004f 307.5px,#990041 331.5px)"></i><i style="background:linear-gradient(90deg,#002099 68.5px,#001499 123.5px,#160f99 144.5px,#420499 180.5px,#540099 193.5px,#750099 216.5px,#990099 238.5px,#99007c 258.5px,#990062 283.5px,#990047 322.5px)"></i><i style="background:linear-gradient(90deg,#001e99 69.5px,#001299 122.5px,#1e0b99 150.5px,#440299 181.5px,#620099 203.5px,#990099 238.5px,#990071 268.5px,#990060 286.5px,#99004d 313.5px)"></i><i style="background:linear-gradient(90deg,#001b99 71.5px,#001099 121.5px,#170a99 143.5px,#420099 179.5px,#680099 207.5px,#980099 238.5px,#990076 264.5px,#99005f 288.5px,#990054 304.5px)"></i><i style="background:linear-gradient(90deg,#001999 73.5px,#000e99 120.5px,#370099 169.5px,#490099 184.5px,#6e0099 211.5px,#990099 239.5px,#99007a 261.5px,#99005b 294.5px)"></i><i style="background:linear-gradient(90deg,#001699 74.5px,#000c99 119.5px,#2e0099 161.5px,#420099 178.5px,#710099 213.5px,#990099 239.5px,#99007e 258.5px,#990063 285.5px)"></i><i style="background:linear-gradient(90deg,#001499 76.5px,#000a99 118.5px,#260099 153.5px,#4e0099 187.5px,#740099 215.5px,#990099 239.5px,#990081 256.5px,#99006c 276.5px)"></i><i style="background:linear-gradient(90deg,#001199 78.5px,#000899 116.5px,#1f0099 146.5px,#420099 177.5px,#770099 217.5px,#990099 239.5px,#990075 267.5px)"></i><i style="background:linear-gradient(90deg,#000f99 80.5px,#000699 115.5px,#170099 138.5px,#4a0099 183.5px,#6c0099 209.5px,#980099 239.5px,#990081 257.5px)"></i><i style="background:linear-gradient(90deg,#000c99 82.5px,#000499 114.5px,#100099 130.5px,#420099 176.5px,#640099 203.5px,#990099 240.5px,#99008d 248.5px)"></i><i style="background:linear-gradient(90deg,#000a99 84.5px,#000399 113.5px,#090099 122.5px,#220099 147.5px,#4b0099 183.5px,#6f0099 211.5px,#980099 239.5px)"></i><i style="background:linear-gradient(90deg,#000799 86.5px,#000199 112.5px,#250099 149.5px,#480099 180.5px,#890099 229.5px)"></i><i style="background:linear-gradient(90deg,#000599 88.5px,#020099 113.5px,#3e0099 171.5px,#7c0099 220.5px)"></i><i style="background:linear-gradient(90deg,#000299 91.5px,#000099 109.5px,#050099 115.5px,#390099 166.5px,#700099 211.5px)"></i><i style="background:linear-gradient(90deg,#000099 93.5px,#000099 108.5px,#060099 115.5px,#3d0099 169.5px,#650099 202.5px)"></i><i style="background:linear-gradient(90deg,#000099 96.5px,#000099 107.5px,#080099 116.5px,#360099 162.5px,#590099 192.5px)"></i><i style="background:linear-gradient(90deg,#000099 99.5px,#000099 106.5px,#090099 116.5px,#4e0099 183.5px)"></i><i style="background:linear-gradient(90deg,#000099 103.5px,#180099 131.5px,#450099 174.5px)"></i><i style="background:linear-gradient(90deg,#030099 107.5px,#3c0099 165.5px)"></i><i style="background:linear-gradient(90deg,#090099 112.5px,#320099 155.5px)"></i><i style="background:linear-gradient(90deg,#0e0099 117.5px,#290099 146.5px)"></i><i style="background:linear-gradient(90deg,#130099 121.5px,#220099 137.5px)"></i><i></i></div>
<div class="a cr r2" style="left:968px;top:128px;width:622px;height:434px;clip-path:polygon(473.0px 262.5px,221.8px 123.8px,111.0px 402.4px)"><i></i><i></i><i></i><i></i><i></i><i></i><i></i><i></i><i></i><i></i><i></i><i></i><i></i><i></i><i></i><i></i><i></i><i></i><i></i><i></i><i></i><i></i><i></i><i></i><i></i><i></i><i></i><i></i><i></i><i></i><i></i><i></i><i></i><i></i><i></i><i></i><i></i><i></i><i></i><i></i><i></i><i></i><i></i><i></i><i></i><i></i><i></i><i></i><i></i><i></i><i></i><i></i><i></i><i></i><i></i><i></i><i></i><i></i><i></i><i></i><i></i><i style="background:linear-gradient(90deg,#00ff00 219.5px,#00ff00 222.5px,#05ff00 225.5px)"></i><i style="background:linear-gradient(90deg,#00ff02 218.5px,#01ff00 222.5px,#0bff00 228.5px)"></i><i style="background:linear-gradient(90deg,#00ff04 218.5px,#02ff02 222.5px,#12ff00 232.5px)"></i><i style="background:linear-gradient(90deg,#00ff06 217.5px,#02ff04 221.5px,#1aff00 236.5px)"></i><i style="background:linear-gradient(90deg,#00ff08 216.5px,#00ff06 219.5px,#21ff00 239.5px)"></i><i style="background:linear-gradient(90deg,#00ff0a 215.5px,#00ff08 218.5px,#29ff00 243.5px)"></i><i style="background:linear-gradient(90deg,#00ff0c 214.5px,#01ff0a 218.5px,#30ff00 246.5px)"></i><i style="background:linear-gradient(90deg,#00ff0d 214.5px,#07ff0a 221.5px,#2fff00 244.5px,#39ff00 250.5px)"></i><i style="background:linear-gradient(90deg,#00ff0f 213.5px,#05ff0d 219.5px,#38ff00 248.5px,#43ff00 254.5px)"></i><i style="background:linear-gradient(90deg,#00ff11 212.5px,#00ff10 215.5px,#3fff00 251.5px,#4bff00 257.5px)"></i><i style="background:linear-gradient(90deg,#00ff14 211.5px,#00ff12 214.5px,#12ff0e 225.5px,#49ff00 255.5px,#54ff00 261.5px)"></i><i style="background:linear-gradient(90deg,#00ff16 210.5px,#01ff14 214.5px,#17ff0f 227.5px,#53ff00 259.5px,#5fff00 265.5px)"></i><i style="background:linear-gradient(90deg,#00ff18 210.5px,#01ff16 213.5px,#1eff0f 230.5px,#5bff00 262.5px,#67ff00 268.5px)"></i><i style="background:linear-gradient(90deg,#00ff1a 209.5px,#02ff18 213.5px,#1cff12 228.5px,#66ff00 266.5px,#72ff00 272.5px)"></i><i style="background:linear-gradient(90deg,#00ff1c 208.5px,#00ff1b 211.5px,#25ff12 232.5px,#71ff00 270.5px,#7cff00 275.5px)"></i><i style="background:linear-gradient(90deg,#00ff1e 207.5px,#03ff1c 212.5px,#25ff14 231.5px,#7aff00 273.5px,#87ff00 279.5px)"></i><i style="background:linear-gradient(90deg,#00ff21 206.5px,#01ff1f 210.5px,#36ff13 239.5px,#86ff00 277.5px,#94ff00 283.5px)"></i><i style="background:linear-gradient(90deg,#00ff23 206.5px,#04ff21 211.5px,#38ff15 239.5px,#63ff0b 260.5px,#90ff00 280.5px,#9eff00 286.5px)"></i><i style="background:linear-gradient(90deg,#00ff25 205.5px,#02ff24 209.5px,#09ff22 213.5px,#5dff0f 256.5px,#9dff00 284.5px,#abff00 290.5px)"></i><i style="background:linear-gradient(90deg,#00ff28 204.5px,#00ff27 207.5px,#10ff23 216.5px,#57ff13 252.5px,#aaff00 288.5px,#b6ff00 293.5px)"></i><i style="background:linear-gradient(90deg,#00ff2a 203.5px,#03ff28 208.5px,#51ff17 248.5px,#8bff0a 274.5px,#b5ff00 291.5px,#c5ff00 297.5px)"></i><i style="background:linear-gradient(90deg,#00ff2c 203.5px,#01ff2b 206.5px,#0aff29 211.5px,#5aff17 251.5px,#98ff0a 278.5px,#c3ff00 295.5px,#d3ff00 301.5px)"></i><i style="background:linear-gradient(90deg,#00ff2f 202.5px,#06ff2d 208.5px,#56ff1b 248.5px,#94ff0d 275.5px,#d2ff00 299.5px,#e0ff00 304.5px)"></i><i style="background:linear-gradient(90deg,#00ff32 201.5px,#02ff30 205.5px,#11ff2d 213.5px,#5dff1c 250.5px,#a4ff0d 280.5px,#dfff00 302.5px,#f0ff00 308.5px)"></i><i style="background:linear-gradient(90deg,#00ff34 200.5px,#00ff33 203.5px,#0bff31 209.5px,#3fff26 235.5px,#6bff1c 255.5px,#a0ff11 277.5px,#efff00 306.5px,#fffd00 312.5px)"></i><i style="background:linear-gradient(90deg,#00ff37 199.5px,#00ff36 202.5px,#05ff35 205.5px,#3dff29 233.5px,#67ff20 252.5px,#b6ff0f 284.5px,#fdff00 309.5px,#fff000 315.5px)"></i><i style="background:linear-gradient(90deg,#00ff39 199.5px,#01ff38 202.5px,#39ff2d 230.5px,#78ff20 258.5px,#c5ff0f 288.5px,#ffff03 308.5px,#ffe000 319.5px)"></i><i style="background:linear-gradient(90deg,#00ff3c 198.5px,#01ff3b 201.5px,#20ff35 217.5px,#74ff24 255.5px,#c1ff14 285.5px,#ffff07 306.5px,#ffe100 317.5px,#ffd500 322.5px)"></i><i style="background:linear-gradient(90deg,#00ff3f 197.5px,#04ff3d 202.5px,#22ff37 217.5px,#6bff28 250.5px,#bdff18 282.5px,#feff0b 304.5px,#ffda01 318.5px,#ffc800 326.5px)"></i><i style="background:linear-gradient(90deg,#00ff42 196.5px,#00ff41 199.5px,#24ff3a 217.5px,#67ff2d 247.5px,#aeff1e 275.5px,#fdff0f 302.5px,#ffd504 318.5px,#ffbc00 330.5px)"></i><i style="background:linear-gradient(90deg,#00ff45 195.5px,#00ff44 198.5px,#24ff3d 216.5px,#6aff2f 247.5px,#c0ff1e 280.5px,#ffff12 301.5px,#ffd306 317.5px,#ffbe00 327.5px,#ffb200 333.5px)"></i><i style="background:linear-gradient(90deg,#00ff48 195.5px,#01ff47 198.5px,#24ff40 215.5px,#6dff32 247.5px,#aeff25 272.5px,#feff16 299.5px,#ffdd0c 311.5px,#ffca07 319.5px,#ffb200 331.5px,#ffa700 337.5px)"></i><i style="background:linear-gradient(90deg,#00ff4b 194.5px,#01ff4a 197.5px,#13ff46 206.5px,#64ff37 242.5px,#a7ff2a 268.5px,#fffd19 298.5px,#ffe011 308.5px,#ffc80a 318.5px,#ffa700 335.5px,#ff9d00 341.5px)"></i><i style="background:linear-gradient(90deg,#00ff4e 193.5px,#01ff4d 196.5px,#17ff49 207.5px,#67ff3a 242.5px,#aeff2d 269.5px,#fffe1d 296.5px,#ffe616 304.5px,#ffc80d 316.5px,#ffac04 330.5px,#ff9600 344.5px)"></i><i style="background:linear-gradient(90deg,#00ff51 192.5px,#00ff50 195.5px,#04ff4f 197.5px,#59ff40 235.5px,#a7ff32 265.5px,#ffff22 294.5px,#ffe118 304.5px,#ffc610 315.5px,#ffa505 332.5px,#ff8d00 348.5px)"></i><i style="background:linear-gradient(90deg,#00ff54 191.5px,#00ff53 194.5px,#19ff4f 206.5px,#70ff40 243.5px,#aeff35 266.5px,#feff26 292.5px,#ffe71e 300.5px,#ffc412 314.5px,#ffa307 331.5px,#ff8e00 345.5px,#ff8600 351.5px)"></i><i style="background:linear-gradient(90deg,#00ff57 191.5px,#00ff57 193.5px,#24ff51 210.5px,#71ff44 242.5px,#c1ff35 271.5px,#fffe29 291.5px,#ffe220 300.5px,#ffc215 313.5px,#ff9907 335.5px,#ff8500 349.5px,#ff7e00 355.5px)"></i><i style="background:linear-gradient(90deg,#00ff5b 190.5px,#01ff5a 193.5px,#1bff56 205.5px,#77ff47 243.5px,#b1ff3c 264.5px,#fffe2e 289.5px,#ffd01e 305.5px,#ffa80f 324.5px,#ff9107 338.5px,#ff7f00 352.5px,#ff7600 359.5px)"></i><i style="background:linear-gradient(90deg,#00ff5e 189.5px,#01ff5d 192.5px,#1bff59 204.5px,#6bff4d 237.5px,#a7ff43 259.5px,#d4ff3a 274.5px,#ffff33 287.5px,#ffe328 296.5px,#ffc91f 306.5px,#ffa612 323.5px,#ff8b08 340.5px,#ff7700 356.5px,#ff7000 362.5px)"></i><i style="background:linear-gradient(90deg,#01ff62 188.5px,#01ff61 191.5px,#12ff5e 199.5px,#6cff51 236.5px,#9dff49 254.5px,#d6ff3f 273.5px,#feff38 285.5px,#ffde2b 296.5px,#ffc722 305.5px,#ffa414 322.5px,#ff8006 346.5px,#ff6a00 366.5px)"></i><i style="background:linear-gradient(90deg,#01ff65 187.5px,#01ff64 190.5px,#09ff63 194.5px,#3aff5c 215.5px,#6dff55 235.5px,#b3ff4a 260.5px,#fffe3c 284.5px,#ffd12a 299.5px,#ffa417 320.5px,#ff820a 342.5px,#ff6a00 363.5px,#ff6300 370.5px)"></i><i style="background:linear-gradient(90deg,#01ff69 187.5px,#02ff68 190.5px,#27ff63 206.5px,#79ff58 238.5px,#c4ff4c 264.5px,#ffff41 282.5px,#ffd42f 296.5px,#ffbe26 305.5px,#ffa21a 319.5px,#ff7f0b 342.5px,#ff6701 364.5px,#ff5e00 373.5px)"></i><i style="background:linear-gradient(90deg,#01ff6d 186.5px,#02ff6c 189.5px,#14ff69 197.5px,#72ff5e 234.5px,#c6ff50 263.5px,#feff46 280.5px,#ffd735 293.5px,#ffbc29 304.5px,#ffa01c 318.5px,#ff7c0d 342.5px,#ff5f00 370.5px,#ff5900 377.5px)"></i><i style="background:linear-gradient(90deg,#01ff70 185.5px,#02ff70 188.5px,#14ff6d 196.5px,#63ff64 227.5px,#c5ff56 261.5px,#feff4c 278.5px,#ffe03e 288.5px,#ffc832 297.5px,#ff991d 320.5px,#ff720b 348.5px,#ff5b01 371.5px,#ff5400 380.5px)"></i><i style="background:linear-gradient(90deg,#01ff74 184.5px,#02ff73 187.5px,#14ff71 195.5px,#5cff6a 223.5px,#c7ff5b 260.5px,#fffe51 277.5px,#ffd83f 289.5px,#ffc133 298.5px,#ff971f 319.5px,#ff7f14 335.5px,#ff6e0c 349.5px,#ff5400 377.5px,#ff4f00 384.5px)"></i><i style="background:linear-gradient(90deg,#01ff78 183.5px,#02ff77 186.5px,#14ff75 194.5px,#6bff6d 227.5px,#c6ff61 258.5px,#ffff57 275.5px,#ffd642 288.5px,#ffbf37 297.5px,#ff9220 320.5px,#ff7c16 335.5px,#ff670c 353.5px,#ff5101 378.5px,#ff4a00 388.5px)"></i><i style="background:linear-gradient(90deg,#02ff7c 183.5px,#03ff7b 186.5px,#14ff7a 193.5px,#64ff73 223.5px,#c2ff68 255.5px,#feff5d 273.5px,#ffdc4b 284.5px,#ffc43e 293.5px,#ff9023 319.5px,#ff6d11 345.5px,#ff5908 365.5px,#ff4500 391.5px)"></i><i style="background:linear-gradient(90deg,#02ff80 182.5px,#03ff7f 185.5px,#0aff7f 188.5px,#5dff78 219.5px,#b5ff70 249.5px,#fffd62 272.5px,#ffd74e 284.5px,#ffc242 292.5px,#ff9c2d 310.5px,#ff8b24 320.5px,#ff7116 339.5px,#ff5c0c 359.5px,#ff4a02 382.5px,#ff4100 395.5px)"></i><i style="background:linear-gradient(90deg,#02ff84 181.5px,#05ff84 185.5px,#50ff7e 213.5px,#b7ff76 248.5px,#fffe69 270.5px,#ffd552 283.5px,#ffc046 291.5px,#ffa837 302.5px,#ff8e29 316.5px,#ff6d17 340.5px,#ff560b 363.5px,#ff4100 392.5px,#ff3c00 399.5px)"></i><i style="background:linear-gradient(90deg,#02ff89 180.5px,#05ff88 184.5px,#3dff84 205.5px,#9eff7f 238.5px,#d9ff77 257.5px,#ffff71 268.5px,#ffd055 283.5px,#ffb745 293.5px,#ff9c35 306.5px,#ff8025 323.5px,#ff6818 342.5px,#ff580f 358.5px,#ff4303 386.5px,#ff3900 402.5px)"></i><i style="background:linear-gradient(90deg,#02ff8d 179.5px,#07ff8c 184.5px,#38ff89 202.5px,#b6ff83 244.5px,#feff78 266.5px,#ffdc62 277.5px,#ffb348 293.5px,#ff9334 309.5px,#ff7a25 325.5px,#ff6117 346.5px,#ff530f 361.5px,#ff4205 384.5px,#ff3500 406.5px)"></i><i style="background:linear-gradient(90deg,#03ff91 179.5px,#07ff91 183.5px,#30ff8e 198.5px,#b3ff8a 241.5px,#fffd7e 265.5px,#ffda67 276.5px,#ffaf4a 293.5px,#ff9338 307.5px,#ff7b29 322.5px,#ff681e 337.5px,#ff4f0f 363.5px,#ff3500 402.5px,#ff3100 409.5px)"></i><i style="background:linear-gradient(90deg,#03ff96 178.5px,#04ff95 181.5px,#22ff94 192.5px,#acff91 237.5px,#fffe86 263.5px,#ffd86c 275.5px,#ffb251 290.5px,#ff953e 304.5px,#ff782b 322.5px,#ff631e 339.5px,#ff5012 359.5px,#ff3b06 388.5px,#ff2e00 413.5px)"></i><i style="background:linear-gradient(90deg,#03ff9b 177.5px,#04ff9a 180.5px,#28ff98 193.5px,#beff97 241.5px,#ffff8e 261.5px,#ffd973 273.5px,#ffae54 290.5px,#ff8e3d 306.5px,#ff752c 322.5px,#ff6723 333.5px,#ff4810 366.5px,#ff2f01 406.5px,#ff2a00 417.5px)"></i><i style="background:linear-gradient(90deg,#03ff9f 176.5px,#06ff9f 180.5px,#47ff9d 202.5px,#c5ff9e 241.5px,#feff96 259.5px,#ffcf73 275.5px,#ffb15c 287.5px,#ff9647 300.5px,#ff7631 319.5px,#ff6223 335.5px,#ff4914 362.5px,#ff3406 394.5px,#ff2700 420.5px)"></i><i style="background:linear-gradient(90deg,#03ffa4 175.5px,#06ffa4 179.5px,#3bffa2 197.5px,#afffa5 232.5px,#d7ffa5 245.5px,#fffe9e 258.5px,#ffd37d 272.5px,#ffa95b 289.5px,#ff8841 306.5px,#ff6b2d 325.5px,#ff561f 344.5px,#ff4312 367.5px,#ff2901 413.5px,#ff2400 424.5px)"></i><i style="background:linear-gradient(90deg,#03ffa9 175.5px,#08ffa8 179.5px,#35ffa7 194.5px,#7fffa8 216.5px,#bfffad 235.5px,#e4ffad 247.5px,#ffffa8 256.5px,#ffd283 271.5px,#ffaa61 287.5px,#ff8645 305.5px,#ff6c31 322.5px,#ff4f1d 349.5px,#ff4013 368.5px,#ff2702 413.5px,#ff2100 428.5px)"></i><i style="background:linear-gradient(90deg,#03ffae 174.5px,#05ffae 177.5px,#2fffac 191.5px,#88ffae 217.5px,#c0ffb4 233.5px,#edffb6 248.5px,#ffffb3 254.5px,#ffc17b 276.5px,#ffa360 289.5px,#ff8347 305.5px,#ff6832 323.5px,#ff5122 344.5px,#ff4016 365.5px,#ff2704 410.5px,#ff1e00 431.5px)"></i><i style="background:linear-gradient(90deg,#03ffb3 173.5px,#05ffb3 176.5px,#2fffb2 190.5px,#7fffb3 213.5px,#d1ffbe 236.5px,#f0ffc0 247.5px,#fffdbc 253.5px,#ffc181 275.5px,#ff9b5f 291.5px,#ff7e47 306.5px,#ff6534 323.5px,#ff4b20 348.5px,#ff3612 377.5px,#ff2505 410.5px,#ff1b00 435.5px)"></i><i style="background:linear-gradient(90deg,#03ffb8 172.5px,#04ffb8 175.5px,#1fffb7 184.5px,#4affb7 197.5px,#84ffb9 213.5px,#d2ffc5 234.5px,#e9ffca 242.5px,#fffec8 251.5px,#ffac74 282.5px,#ff8a55 298.5px,#ff6c3c 316.5px,#ff5a2f 330.5px,#ff3d19 363.5px,#ff2608 404.5px,#ff1800 438.5px)"></i><i style="background:linear-gradient(90deg,#03ffbe 171.5px,#04ffbe 174.5px,#22ffbd 184.5px,#5cffbd 201.5px,#7effbe 210.5px,#a5ffc2 220.5px,#d6ffcd 233.5px,#efffd4 242.5px,#ffffd4 249.5px,#ffefc4 256.5px,#ffc18f 273.5px,#ffa977 282.5px,#ff8959 297.5px,#ff6b3f 315.5px,#ff532d 334.5px,#ff3d1c 360.5px,#ff2a0d 393.5px,#ff1500 442.5px)"></i><i style="background:linear-gradient(90deg,#04ffc3 171.5px,#06ffc3 174.5px,#25ffc2 184.5px,#4effc2 196.5px,#8fffc5 213.5px,#b3ffca 222.5px,#daffd4 232.5px,#f1ffdc 240.5px,#ffffde 247.5px,#fff0cf 255.5px,#ffdab3 264.5px,#ffc297 272.5px,#ff9f73 285.5px,#ff7c53 302.5px,#ff643d 318.5px,#ff4827 343.5px,#ff3317 372.5px,#ff1c05 420.5px,#ff1300 446.5px)"></i><i style="background:linear-gradient(90deg,#03ffc9 170.5px,#05ffc9 173.5px,#47ffc8 193.5px,#68ffc9 202.5px,#adffce 219.5px,#e1ffdc 232.5px,#f2ffe3 238.5px,#fffee7 246.5px,#fff8e2 250.5px,#ffeed5 256.5px,#ffe5c8 260.5px,#ffbb95 274.5px,#ff9f78 284.5px,#ff7b56 301.5px,#ff6341 316.5px,#ff4b2d 337.5px,#ff3118 372.5px,#ff1a06 420.5px,#ff1000 449.5px)"></i><i style="background:linear-gradient(90deg,#03ffcf 169.5px,#05ffce 172.5px,#2bffce 184.5px,#5dffce 198.5px,#91ffd0 211.5px,#b7ffd5 220.5px,#e4ffe1 231.5px,#f0ffe7 235.5px,#ffffef 244.5px,#fff8ea 250.5px,#fff1e0 255.5px,#ffe6d0 260.5px,#ffb392 276.5px,#ff9a78 285.5px,#ff7e5d 298.5px,#ff5e40 318.5px,#ff452b 341.5px,#ff2f1a 372.5px,#ff1806 423.5px,#ff0e00 453.5px)"></i><i style="background:linear-gradient(90deg,#03ffd5 168.5px,#04ffd4 171.5px,#27ffd4 182.5px,#61ffd4 198.5px,#96ffd6 211.5px,#b9ffda 219.5px,#e6ffe6 230.5px,#f2ffeb 234.5px,#fffff4 242.5px,#fffbf3 248.5px,#fff2e7 255.5px,#ffdecb 263.5px,#ffb499 275.5px,#ff9073 288.5px,#ff6e53 305.5px,#ff563d 322.5px,#ff402b 344.5px,#ff2d1b 372.5px,#ff1607 423.5px,#ff0c00 456.5px)"></i><i style="background:linear-gradient(90deg,#03ffdb 168.5px,#06ffda 171.5px,#31ffda 184.5px,#61ffda 197.5px,#a8ffdd 214.5px,#d0ffe3 223.5px,#ebffeb 230.5px,#f6fff0 234.5px,#fffff7 240.5px,#fffcf8 248.5px,#fff4ed 255.5px,#ffe2d4 262.5px,#ffb29c 275.5px,#ff977f 284.5px,#ff866e 291.5px,#ff725b 301.5px,#ff5a44 317.5px,#ff412f 340.5px,#ff2a1b 374.5px,#ff1508 423.5px,#ff0900 460.5px)"></i><i style="background:linear-gradient(90deg,#03ffe1 167.5px,#05ffe1 170.5px,#2dffe0 182.5px,#61ffe0 196.5px,#9fffe2 211.5px,#e5ffec 227.5px,#f7fff3 233.5px,#fffff8 238.5px,#fffdfb 248.5px,#fff5f1 255.5px,#ffe9e0 260.5px,#ffb4a2 274.5px,#ff917e 285.5px,#ff7360 299.5px,#ff5443 319.5px,#ff3d2e 342.5px,#ff271b 376.5px,#ff1208 426.5px,#ff0700 464.5px)"></i><i style="background:linear-gradient(90deg,#03ffe7 166.5px,#03ffe7 168.5px,#0effe7 172.5px,#46ffe7 188.5px,#7dffe7 202.5px,#a4ffe8 211.5px,#e9fff0 227.5px,#f5fff4 231.5px,#fffff9 237.5px,#fffdfd 247.5px,#fff7f5 254.5px,#ffe5de 261.5px,#ffb9ac 272.5px,#ffa698 277.5px,#ff9182 284.5px,#ff8071 291.5px,#ff6c5e 301.5px,#ff4f42 321.5px,#ff3c30 341.5px,#ff2a21 367.5px,#ff1f16 389.5px,#ff1008 429.5px,#ff0500 467.5px)"></i><i style="background:linear-gradient(90deg,#03ffee 165.5px,#04ffee 168.5px,#2cffee 180.5px,#7dffee 201.5px,#e5fff3 225.5px,#f8fff7 231.5px,#fffff9 235.5px,#fffcf9 239.5px,#fffdfc 248.5px,#fff4f2 255.5px,#ffdfd9 262.5px,#ffa399 277.5px,#ff8d83 284.5px,#ff7b70 292.5px,#ff695f 301.5px,#ff554c 314.5px,#ff483f 325.5px,#ff362f 345.5px,#ff1e18 387.5px,#ff0e09 429.5px,#ff0300 471.5px)"></i><i style="background:linear-gradient(90deg,#02fff5 164.5px,#03fff5 167.5px,#2ffff4 180.5px,#81fff5 201.5px,#e5fff8 224.5px,#f8fffa 230.5px,#fffefa 234.5px,#fffaf8 239.5px,#fff9f9 249.5px,#fff1ef 255.5px,#ffdbd7 262.5px,#ffaea8 273.5px,#ff9893 279.5px,#ff8781 285.5px,#ff6b66 298.5px,#ff4d48 318.5px,#ff332f 346.5px,#ff201c 380.5px,#ff0c09 432.5px,#ff0100 475.5px)"></i><i style="background:linear-gradient(90deg,#02fffc 164.5px,#05fffc 167.5px,#32fffc 180.5px,#81fffc 200.5px,#e1fffd 222.5px,#f3fffd 227.5px,#fffefd 232.5px,#fff8f7 237.5px,#fff5f5 249.5px,#ffebeb 255.5px,#ffd9d8 261.5px,#ffa1a0 275.5px,#ff8987 283.5px,#ff7876 290.5px,#ff6665 299.5px,#ff4a48 319.5px,#ff3635 339.5px,#ff2020 375.5px,#ff0d0c 425.5px,#ff0000 475.5px)"></i><i style="background:linear-gradient(90deg,#02fbff 163.5px,#04fbff 166.5px,#38fbff 181.5px,#7ffbff 199.5px,#e2fbff 222.5px,#fffcff 231.5px,#fff3f5 238.5px,#fff1f2 246.5px,#ffeced 251.5px,#ffe4e5 255.5px,#ffcecf 262.5px,#ff9c9f 275.5px,#ff7f82 285.5px,#ff5c5f 303.5px,#ff4346 322.5px,#ff2d2f 349.5px,#ff1c1e 380.5px,#ff0b0d 425.5px,#ff0001 472.5px)"></i><i style="background:linear-gradient(90deg,#02f4ff 162.5px,#03f4ff 165.5px,#36f4ff 180.5px,#8cf3ff 202.5px,#ecf6ff 225.5px,#fff7ff 231.5px,#ffeff4 237.5px,#ffe5e8 250.5px,#ffdbdf 255.5px,#ffc9ce 261.5px,#ff9097 277.5px,#ff7b82 285.5px,#ff5c63 301.5px,#ff464d 317.5px,#ff3035 342.5px,#ff1b20 378.5px,#ff090e 427.5px,#ff0003 466.5px)"></i><i style="background:linear-gradient(90deg,#02edff 161.5px,#02edff 164.5px,#2dedff 177.5px,#59ecff 189.5px,#ebefff 225.5px,#fff0fd 232.5px,#ffe9f4 236.5px,#ffdee5 248.5px,#ffd1d9 255.5px,#ff9da8 271.5px,#ff7b87 283.5px,#ff5c67 299.5px,#ff424d 318.5px,#ff313a 337.5px,#ff1d25 370.5px,#ff0a11 419.5px,#ff0005 461.5px)"></i><i style="background:linear-gradient(90deg,#01e7ff 160.5px,#02e6ff 163.5px,#44e5ff 183.5px,#75e5ff 196.5px,#e6e8ff 224.5px,#fbeaff 230.5px,#ffe9fd 232.5px,#ffe1f1 237.5px,#ffd4e0 248.5px,#ffcbd7 253.5px,#ffbbc9 259.5px,#ff8d9d 274.5px,#ff7282 285.5px,#ff5463 302.5px,#ff3c4a 321.5px,#ff2a37 343.5px,#ff1923 376.5px,#ff0811 421.5px,#ff0007 456.5px)"></i><i style="background:linear-gradient(90deg,#01e0ff 160.5px,#04e0ff 163.5px,#49deff 184.5px,#8ddeff 202.5px,#e5e1ff 224.5px,#ffe2fe 232.5px,#ffd9f0 237.5px,#ffc0d2 253.5px,#ff8ca1 272.5px,#ff7286 283.5px,#ff4f63 303.5px,#ff3a4b 321.5px,#ff2636 346.5px,#ff1825 374.5px,#ff0915 413.5px,#ff0009 451.5px)"></i><i style="background:linear-gradient(90deg,#01daff 159.5px,#03daff 162.5px,#32d8ff 177.5px,#7ad7ff 197.5px,#e4daff 224.5px,#ffdbfe 232.5px,#ffcce8 240.5px,#ffb1c9 255.5px,#ff718a 281.5px,#ff4d65 302.5px,#ff374c 321.5px,#ff273b 341.5px,#ff1b2c 363.5px,#ff0b1a 402.5px,#ff000b 446.5px)"></i><i style="background:linear-gradient(90deg,#01d4ff 158.5px,#02d3ff 161.5px,#41d1ff 181.5px,#73d0ff 195.5px,#e3d2ff 224.5px,#ffd3fe 232.5px,#ffbfe2 242.5px,#ffa5c3 256.5px,#ff7492 277.5px,#ff5a77 291.5px,#ff3b55 314.5px,#ff2940 335.5px,#ff192d 363.5px,#ff0718 410.5px,#ff000e 441.5px)"></i><i style="background:linear-gradient(90deg,#01ceff 157.5px,#01cdff 160.5px,#3fcbff 180.5px,#7bcaff 197.5px,#ffccff 232.5px,#ffb5de 243.5px,#ff7b9e 271.5px,#ff5677 291.5px,#ff3a57 313.5px,#ff2a46 330.5px,#ff172e 363.5px,#ff081c 402.5px,#ff0010 435.5px)"></i><i style="background:linear-gradient(90deg,#01c8ff 156.5px,#03c7ff 160.5px,#51c4ff 185.5px,#8ac3ff 201.5px,#ffc4ff 232.5px,#ffa8d8 245.5px,#ff739b 272.5px,#ff4c71 295.5px,#ff3859 312.5px,#ff2341 337.5px,#ff162f 363.5px,#ff051b 407.5px,#ff0013 430.5px)"></i><i style="background:linear-gradient(90deg,#01c2ff 156.5px,#01c2ff 158.5px,#08c1ff 161.5px,#45beff 181.5px,#83bcff 199.5px,#febcff 232.5px,#ffbafc 233.5px,#ffa2da 244.5px,#ff7aa9 265.5px,#ff5e89 281.5px,#ff4b75 293.5px,#ff365b 311.5px,#ff2649 329.5px,#ff1633 358.5px,#ff051e 402.5px,#ff0015 425.5px)"></i><i style="background:linear-gradient(90deg,#01bcff 155.5px,#02bcff 158.5px,#46b8ff 181.5px,#87b6ff 200.5px,#feb4ff 232.5px,#ffb3fd 233.5px,#ffa5e8 239.5px,#ff93cf 248.5px,#ff70a4 267.5px,#ff4d7b 289.5px,#ff345d 310.5px,#ff254b 327.5px,#ff1434 358.5px,#ff0622 394.5px,#ff0018 420.5px)"></i><i style="background:linear-gradient(90deg,#00b7ff 154.5px,#01b6ff 157.5px,#09b6ff 160.5px,#51b2ff 184.5px,#99afff 205.5px,#ffabfd 233.5px,#ff90d4 246.5px,#ff73ae 262.5px,#ff4f82 285.5px,#ff3c6d 299.5px,#ff325f 309.5px,#ff2049 331.5px,#ff1235 358.5px,#ff0727 386.5px,#ff001b 415.5px)"></i><i style="background:linear-gradient(90deg,#00b2ff 153.5px,#03b1ff 157.5px,#52acff 184.5px,#99a8ff 205.5px,#ffa4fe 233.5px,#ff9bef 237.5px,#ff89d4 246.5px,#ff70b2 260.5px,#ff5089 281.5px,#ff3466 304.5px,#ff2351 323.5px,#ff1740 343.5px,#ff0b2e 372.5px,#ff001d 410.5px)"></i><i style="background:linear-gradient(90deg,#00adff 152.5px,#00acff 155.5px,#05acff 157.5px,#53a6ff 184.5px,#b2a1ff 212.5px,#ff9dfe 233.5px,#ff82d4 246.5px,#ff6ab2 260.5px,#ff4d8b 280.5px,#ff3268 303.5px,#ff2254 321.5px,#ff1541 343.5px,#ff092f 372.5px,#ff0021 404.5px)"></i><i style="background:linear-gradient(90deg,#00a7ff 152.5px,#00a7ff 154.5px,#07a6ff 157.5px,#51a0ff 183.5px,#8f9cff 202.5px,#ff97ff 233.5px,#ff7ed7 245.5px,#ff66b4 259.5px,#ff4486 283.5px,#ff2f6a 302.5px,#ff1c4f 327.5px,#ff1342 343.5px,#ff0831 370.5px,#ff0024 399.5px)"></i><i style="background:linear-gradient(90deg,#00a2ff 151.5px,#01a2ff 154.5px,#4f9bff 182.5px,#9696ff 204.5px,#ff90ff 233.5px,#ff7bdd 243.5px,#ff5fb2 260.5px,#ff4288 282.5px,#ff3070 298.5px,#ff1d56 321.5px,#ff1346 339.5px,#ff0632 370.5px,#ff0027 394.5px)"></i><i style="background:linear-gradient(90deg,#009eff 150.5px,#019dff 153.5px,#159bff 161.5px,#6f93ff 192.5px,#a48fff 208.5px,#fe89ff 233.5px,#ff6ed2 247.5px,#ff59b0 261.5px,#ff4391 277.5px,#ff2e72 297.5px,#ff205f 313.5px,#ff1147 339.5px,#ff0636 365.5px,#ff002a 389.5px)"></i><i style="background:linear-gradient(90deg,#0099ff 149.5px,#0098ff 152.5px,#0f97ff 158.5px,#3d92ff 175.5px,#738dff 193.5px,#a489ff 208.5px,#fe82ff 233.5px,#ff6cd8 245.5px,#ff58b7 258.5px,#ff4093 276.5px,#ff2b74 296.5px,#ff2164 309.5px,#ff124c 334.5px,#ff0538 363.5px,#ff002d 384.5px)"></i><i style="background:linear-gradient(90deg,#0094ff 148.5px,#0293ff 152.5px,#448cff 177.5px,#9784ff 204.5px,#ff7afd 234.5px,#ff61d0 248.5px,#ff51b5 259.5px,#ff3e97 274.5px,#ff2b79 293.5px,#ff1f68 307.5px,#ff1352 328.5px,#ff0740 353.5px,#ff0031 378.5px)"></i><i style="background:linear-gradient(90deg,#0090ff 148.5px,#048fff 152.5px,#4b87ff 179.5px,#947fff 203.5px,#ff74fd 234.5px,#ff5fd6 246.5px,#ff4ab1 261.5px,#ff3894 276.5px,#ff297b 292.5px,#ff1d68 307.5px,#ff1053 328.5px,#ff0640 353.5px,#ff0035 373.5px)"></i><i style="background:linear-gradient(90deg,#008bff 147.5px,#018bff 150.5px,#088aff 153.5px,#4f81ff 180.5px,#a878ff 209.5px,#ff6efe 234.5px,#ff57d1 248.5px,#ff48b6 259.5px,#ff379a 273.5px,#ff2880 289.5px,#ff1b6a 306.5px,#ff0e54 328.5px,#ff0038 368.5px)"></i><i style="background:linear-gradient(90deg,#0087ff 146.5px,#0186ff 149.5px,#1683ff 158.5px,#677aff 188.5px,#b271ff 212.5px,#ff69fe 234.5px,#ff56da 245.5px,#ff45bb 257.5px,#ff36a0 270.5px,#ff2c8d 281.5px,#ff196c 305.5px,#ff0c54 329.5px,#ff003c 363.5px)"></i><i style="background:linear-gradient(90deg,#0083ff 145.5px,#0082ff 148.5px,#0e80ff 154.5px,#317cff 168.5px,#6875ff 188.5px,#af6cff 211.5px,#ff63ff 234.5px,#ff4ed5 247.5px,#ff42be 256.5px,#ff319d 272.5px,#ff278c 282.5px,#ff1c78 296.5px,#ff1061 316.5px,#ff034a 344.5px,#ff0040 358.5px)"></i><i style="background:linear-gradient(90deg,#007fff 144.5px,#007eff 147.5px,#0b7cff 152.5px,#6670ff 187.5px,#b966ff 214.5px,#ff5dff 234.5px,#ff4fe1 243.5px,#ff3fc1 255.5px,#ff32a7 267.5px,#ff2690 280.5px,#ff1775 299.5px,#ff0f65 313.5px,#ff034e 339.5px,#ff0044 353.5px)"></i><i style="background:linear-gradient(90deg,#007bff 144.5px,#017aff 147.5px,#0f78ff 153.5px,#676bff 187.5px,#b961ff 214.5px,#fe58ff 234.5px,#ff46d9 246.5px,#ff3cc4 254.5px,#ff2494 278.5px,#ff177b 295.5px,#ff0d67 312.5px,#ff0049 347.5px)"></i><i style="background:linear-gradient(90deg,#0077ff 143.5px,#0176ff 146.5px,#0c74ff 151.5px,#3d6dff 171.5px,#6867ff 187.5px,#b65cff 213.5px,#fe52ff 234.5px,#ff3fd4 248.5px,#ff35c0 256.5px,#ff27a1 271.5px,#ff1e90 281.5px,#ff0c69 311.5px,#ff004e 342.5px)"></i><i style="background:linear-gradient(90deg,#0073ff 142.5px,#0172ff 145.5px,#0771ff 148.5px,#5e64ff 183.5px,#b358ff 212.5px,#ff4cfd 235.5px,#ff3edd 245.5px,#ff32c3 255.5px,#ff1f99 276.5px,#ff0e74 302.5px,#ff045f 322.5px,#ff0053 337.5px)"></i><i style="background:linear-gradient(90deg,#006fff 141.5px,#006eff 144.5px,#146bff 153.5px,#5f60ff 183.5px,#b054ff 211.5px,#ff47fe 235.5px,#ff34d0 250.5px,#ff27b2 263.5px,#ff1e9f 273.5px,#ff158a 286.5px,#ff0c75 302.5px,#ff015f 324.5px,#ff0058 332.5px)"></i><i style="background:linear-gradient(90deg,#006cff 140.5px,#006aff 143.5px,#0869ff 147.5px,#3762ff 167.5px,#685aff 186.5px,#c04dff 216.5px,#ff43fe 235.5px,#ff38e4 243.5px,#ff2ac2 256.5px,#ff1a9e 274.5px,#ff0c7c 297.5px,#ff0164 319.5px,#ff005d 327.5px)"></i><i style="background:linear-gradient(90deg,#0068ff 140.5px,#0167ff 143.5px,#1563ff 152.5px,#6956ff 186.5px,#bd48ff 215.5px,#ff3eff 235.5px,#ff2dd4 249.5px,#ff23bc 259.5px,#ff1aa6 270.5px,#ff0b82 293.5px,#ff016a 314.5px,#ff0062 322.5px)"></i><i style="background:linear-gradient(90deg,#0064ff 139.5px,#0163ff 142.5px,#1260ff 150.5px,#6253ff 183.5px,#ba45ff 214.5px,#ff39ff 235.5px,#ff2bda 247.5px,#ff21bf 258.5px,#ff16a5 271.5px,#ff0b87 290.5px,#ff0069 316.5px)"></i><i style="background:linear-gradient(90deg,#0061ff 138.5px,#0060ff 141.5px,#0d5dff 147.5px,#634fff 183.5px,#9447ff 201.5px,#d03dff 221.5px,#fe35ff 235.5px,#ff2ae3 244.5px,#ff21c9 254.5px,#ff13a4 272.5px,#ff0888 290.5px,#ff006f 311.5px)"></i><i style="background:linear-gradient(90deg,#005dff 137.5px,#005cff 140.5px,#1359ff 149.5px,#644bff 183.5px,#9d41ff 204.5px,#d038ff 221.5px,#fe31ff 235.5px,#ff22d6 249.5px,#ff13ae 267.5px,#ff078d 287.5px,#ff0075 306.5px)"></i><i style="background:linear-gradient(90deg,#005aff 136.5px,#0059ff 139.5px,#0e56ff 146.5px,#3450ff 163.5px,#6a46ff 185.5px,#a93bff 208.5px,#fe2cff 235.5px,#ff19c8 255.5px,#ff0fad 268.5px,#ff048b 289.5px,#ff007c 301.5px)"></i><i style="background:linear-gradient(90deg,#0056ff 136.5px,#0155ff 139.5px,#1651ff 149.5px,#7041ff 187.5px,#b235ff 211.5px,#ff27fe 236.5px,#ff1ee2 245.5px,#ff13c2 258.5px,#ff079e 277.5px,#ff0083 296.5px)"></i><i style="background:linear-gradient(90deg,#0053ff 135.5px,#0152ff 138.5px,#1e4dff 152.5px,#713dff 187.5px,#bb30ff 214.5px,#ff23fe 236.5px,#ff1ae0 246.5px,#ff11c5 257.5px,#ff06a4 274.5px,#ff008c 290.5px)"></i><i style="background:linear-gradient(90deg,#0050ff 134.5px,#004fff 137.5px,#044eff 139.5px,#543fff 175.5px,#aa2fff 208.5px,#ff1fff 236.5px,#ff18e6 244.5px,#ff0fc8 256.5px,#ff05aa 271.5px,#ff0094 285.5px)"></i><i style="background:linear-gradient(90deg,#004dff 133.5px,#004cff 136.5px,#1248ff 145.5px,#6638ff 182.5px,#b02aff 210.5px,#ff1bff 236.5px,#ff13e4 245.5px,#ff0ccb 255.5px,#ff05b2 267.5px,#ff009c 280.5px)"></i><i style="background:linear-gradient(90deg,#004aff 133.5px,#0049ff 135.5px,#1e43ff 150.5px,#6735ff 182.5px,#b626ff 212.5px,#ff18ff 236.5px,#ff0ace 254.5px,#ff00ae 270.5px,#ff00a5 275.5px)"></i><i style="background:linear-gradient(90deg,#0047ff 132.5px,#0146ff 135.5px,#1741ff 146.5px,#6332ff 180.5px,#b921ff 213.5px,#fe14ff 236.5px,#ff07d1 253.5px,#ff00b8 265.5px,#ff00af 270.5px)"></i><i style="background:linear-gradient(90deg,#0044ff 131.5px,#0143ff 134.5px,#253bff 152.5px,#702cff 185.5px,#bc1dff 214.5px,#fe10ff 236.5px,#ff05d4 252.5px,#ff00b9 265.5px)"></i><i style="background:linear-gradient(90deg,#0041ff 130.5px,#0040ff 133.5px,#2039ff 149.5px,#6c2aff 183.5px,#a91eff 207.5px,#fd0dff 236.5px,#ff03dc 249.5px,#ff00c5 259.5px)"></i><i style="background:linear-gradient(90deg,#003eff 129.5px,#003dff 132.5px,#3033ff 156.5px,#6828ff 181.5px,#b717ff 212.5px,#fd09ff 236.5px,#ff00dd 249.5px,#ff00d1 254.5px)"></i><i style="background:linear-gradient(90deg,#003bff 129.5px,#013aff 132.5px,#2d31ff 154.5px,#7023ff 184.5px,#ba13ff 213.5px,#fd06ff 236.5px,#ff00ea 244.5px,#ff00dd 249.5px)"></i><i style="background:linear-gradient(90deg,#0039ff 128.5px,#0137ff 131.5px,#1034ff 139.5px,#3d2bff 161.5px,#6c21ff 182.5px,#ba10ff 213.5px,#ff01ff 237.5px,#ff00eb 244.5px)"></i><i style="background:linear-gradient(90deg,#0036ff 127.5px,#0434ff 132.5px,#3c28ff 160.5px,#661fff 179.5px,#ad10ff 208.5px,#ff00ff 237.5px,#ff00f9 239.5px)"></i><i style="background:linear-gradient(90deg,#0033ff 126.5px,#0032ff 129.5px,#0d2fff 136.5px,#3b25ff 159.5px,#691bff 180.5px,#b00cff 209.5px,#e700ff 229.5px,#f600ff 234.5px)"></i><i style="background:linear-gradient(90deg,#0031ff 125.5px,#0030ff 128.5px,#052eff 131.5px,#581cff 172.5px,#920fff 197.5px,#d600ff 223.5px,#e400ff 228.5px)"></i><i style="background:linear-gradient(90deg,#002eff 125.5px,#012dff 128.5px,#0c2aff 134.5px,#5919ff 172.5px,#950cff 198.5px,#c800ff 218.5px,#d600ff 223.5px)"></i><i style="background:linear-gradient(90deg,#002bff 124.5px,#0629ff 130.5px,#4d19ff 166.5px,#9309ff 197.5px,#bb00ff 213.5px,#c900ff 218.5px)"></i><i style="background:linear-gradient(90deg,#0029ff 123.5px,#0227ff 127.5px,#5016ff 167.5px,#8a08ff 193.5px,#bc00ff 213.5px)"></i><i style="background:linear-gradient(90deg,#0027ff 122.5px,#0025ff 125.5px,#0724ff 129.5px,#5113ff 167.5px,#a000ff 202.5px,#af00ff 208.5px)"></i><i style="background:linear-gradient(90deg,#0024ff 121.5px,#0322ff 126.5px,#261aff 145.5px,#650bff 176.5px,#9500ff 197.5px,#a300ff 203.5px)"></i><i style="background:linear-gradient(90deg,#0022ff 121.5px,#0120ff 124.5px,#2b16ff 147.5px,#570cff 169.5px,#8a00ff 192.5px,#9500ff 197.5px)"></i><i style="background:linear-gradient(90deg,#001fff 120.5px,#041dff 125.5px,#3013ff 149.5px,#7f00ff 187.5px,#8a00ff 192.5px)"></i><i style="background:linear-gradient(90deg,#001dff 119.5px,#021cff 123.5px,#3310ff 150.5px,#7500ff 182.5px,#8000ff 187.5px)"></i><i style="background:linear-gradient(90deg,#001bff 118.5px,#001aff 121.5px,#1c13ff 137.5px,#6900ff 176.5px,#7500ff 182.5px)"></i><i style="background:linear-gradient(90deg,#0019ff 117.5px,#0018ff 120.5px,#1612ff 133.5px,#5f00ff 171.5px,#6b00ff 177.5px)"></i><i style="background:linear-gradient(90deg,#0016ff 117.5px,#0115ff 120.5px,#190fff 134.5px,#5600ff 166.5px,#6000ff 171.5px)"></i><i style="background:linear-gradient(90deg,#0014ff 116.5px,#0113ff 119.5px,#0e10ff 127.5px,#4d00ff 161.5px,#5700ff 166.5px)"></i><i style="background:linear-gradient(90deg,#0012ff 115.5px,#0211ff 119.5px,#110dff 128.5px,#4200ff 155.5px,#4e00ff 161.5px)"></i><i style="background:linear-gradient(90deg,#0010ff 114.5px,#030eff 119.5px,#3a00ff 150.5px,#4500ff 156.5px)"></i><i style="background:linear-gradient(90deg,#000eff 113.5px,#010dff 117.5px,#3200ff 145.5px,#3d00ff 151.5px)"></i><i style="background:linear-gradient(90deg,#000cff 113.5px,#040aff 118.5px,#2a00ff 140.5px,#3400ff 146.5px)"></i><i style="background:linear-gradient(90deg,#000aff 112.5px,#0208ff 116.5px,#2b00ff 140.5px)"></i><i style="background:linear-gradient(90deg,#0008ff 111.5px,#0007ff 114.5px,#2300ff 135.5px)"></i><i style="background:linear-gradient(90deg,#0006ff 110.5px,#0005ff 113.5px,#1c00ff 130.5px)"></i><i style="background:linear-gradient(90deg,#0004ff 109.5px,#0103ff 113.5px,#1500ff 125.5px)"></i><i style="background:linear-gradient(90deg,#0002ff 109.5px,#0101ff 112.5px,#0e00ff 120.5px)"></i><i style="background:linear-gradient(90deg,#0000ff 109.5px,#0700ff 115.5px)"></i><i></i><i></i><i></i><i></i><i></i><i></i><i></i><i></i><i></i><i></i><i></i><i></i><i></i><i></i><i></i></div>
<div class="a" style="left:968px;top:127px;width:622px;height:1.2px;background:#a8a8a8"></div>
<div class="a" style="left:1589.2px;top:127px;width:1.2px;height:435px;background:#a8a8a8"></div>
<div class="a" style="left:968px;top:127px;width:1.2px;height:439px;background:#a8a8a8"></div>
<div class="a" style="left:962.5px;top:560.8px;width:627.5px;height:1.2px;background:#a8a8a8"></div>
<div class="a" style="left:967.9px;top:561px;width:1.3px;height:5px;background:#c8c8c8"></div>
<div class="a" style="left:962.5px;top:560.6px;width:6px;height:1.4px;background:#c8c8c8"></div>
<div class="t" style="left:964.40px;top:569.64px;font-size:12px;transform:scaleX(1.1400);transform-origin:0 0;color:#dcdcdc;">0</div>
<div class="t" style="left:954.39px;top:557.24px;font-size:12px;transform:scaleX(1.1400);transform-origin:0 0;color:#dcdcdc;">0</div>
<div class="a" style="left:1041.8px;top:561px;width:1.3px;height:5px;background:#c8c8c8"></div>
<div class="a" style="left:962.5px;top:509.1px;width:6px;height:1.4px;background:#c8c8c8"></div>
<div class="t" style="left:1032.54px;top:569.64px;font-size:12px;transform:scaleX(1.1400);transform-origin:0 0;color:#dcdcdc;">0.1</div>
<div class="t" style="left:942.98px;top:504.22px;font-size:12px;transform:scaleX(1.1400);transform-origin:0 0;color:#dcdcdc;">0.1</div>
<div class="a" style="left:1115.6px;top:561px;width:1.3px;height:5px;background:#c8c8c8"></div>
<div class="a" style="left:962.5px;top:457.5px;width:6px;height:1.4px;background:#c8c8c8"></div>
<div class="t" style="left:1106.39px;top:569.64px;font-size:12px;transform:scaleX(1.1400);transform-origin:0 0;color:#dcdcdc;">0.2</div>
<div class="t" style="left:942.98px;top:452.69px;font-size:12px;transform:scaleX(1.1400);transform-origin:0 0;color:#dcdcdc;">0.2</div>
<div class="a" style="left:1189.5px;top:561px;width:1.3px;height:5px;background:#c8c8c8"></div>
<div class="a" style="left:962.5px;top:406.0px;width:6px;height:1.4px;background:#c8c8c8"></div>
<div class="t" style="left:1180.24px;top:569.64px;font-size:12px;transform:scaleX(1.1400);transform-origin:0 0;color:#dcdcdc;">0.3</div>
<div class="t" style="left:942.98px;top:401.17px;font-size:12px;transform:scaleX(1.1400);transform-origin:0 0;color:#dcdcdc;">0.3</div>
<div class="a" style="left:1263.3px;top:561px;width:1.3px;height:5px;background:#c8c8c8"></div>
<div class="a" style="left:962.5px;top:354.5px;width:6px;height:1.4px;background:#c8c8c8"></div>
<div class="t" style="left:1254.09px;top:569.64px;font-size:12px;transform:scaleX(1.1400);transform-origin:0 0;color:#dcdcdc;">0.4</div>
<div class="t" style="left:942.98px;top:349.64px;font-size:12px;transform:scaleX(1.1400);transform-origin:0 0;color:#dcdcdc;">0.4</div>
<div class="a" style="left:1337.2px;top:561px;width:1.3px;height:5px;background:#c8c8c8"></div>
<div class="a" style="left:962.5px;top:303.0px;width:6px;height:1.4px;background:#c8c8c8"></div>
<div class="t" style="left:1327.94px;top:569.64px;font-size:12px;transform:scaleX(1.1400);transform-origin:0 0;color:#dcdcdc;">0.5</div>
<div class="t" style="left:942.98px;top:298.12px;font-size:12px;transform:scaleX(1.1400);transform-origin:0 0;color:#dcdcdc;">0.5</div>
<div class="a" style="left:1411.0px;top:561px;width:1.3px;height:5px;background:#c8c8c8"></div>
<div class="a" style="left:962.5px;top:251.4px;width:6px;height:1.4px;background:#c8c8c8"></div>
<div class="t" style="left:1401.79px;top:569.64px;font-size:12px;transform:scaleX(1.1400);transform-origin:0 0;color:#dcdcdc;">0.6</div>
<div class="t" style="left:942.98px;top:246.59px;font-size:12px;transform:scaleX(1.1400);transform-origin:0 0;color:#dcdcdc;">0.6</div>
<div class="a" style="left:1484.8px;top:561px;width:1.3px;height:5px;background:#c8c8c8"></div>
<div class="a" style="left:962.5px;top:199.9px;width:6px;height:1.4px;background:#c8c8c8"></div>
<div class="t" style="left:1475.64px;top:569.64px;font-size:12px;transform:scaleX(1.1400);transform-origin:0 0;color:#dcdcdc;">0.7</div>
<div class="t" style="left:942.98px;top:195.07px;font-size:12px;transform:scaleX(1.1400);transform-origin:0 0;color:#dcdcdc;">0.7</div>
<div class="a" style="left:1558.7px;top:561px;width:1.3px;height:5px;background:#c8c8c8"></div>
<div class="a" style="left:962.5px;top:148.4px;width:6px;height:1.4px;background:#c8c8c8"></div>
<div class="t" style="left:1549.49px;top:569.64px;font-size:12px;transform:scaleX(1.1400);transform-origin:0 0;color:#dcdcdc;">0.8</div>
<div class="t" style="left:942.98px;top:143.54px;font-size:12px;transform:scaleX(1.1400);transform-origin:0 0;color:#dcdcdc;">0.8</div>
<svg class="a" style="left:968px;top:128px" width="622" height="434" viewBox="968 128 622 434"><rect x="1240.2" y="383.6" width="12.6" height="12.6" fill="none" stroke="#fff" stroke-width="1.3"/><rect x="1289.6" y="383.6" width="12.6" height="12.6" fill="none" stroke="#fff" stroke-width="1.3"/><rect x="1333.8" y="383.6" width="12.6" height="12.6" fill="none" stroke="#fff" stroke-width="1.3"/><rect x="1380.6" y="383.6" width="12.6" height="12.6" fill="none" stroke="#fff" stroke-width="1.3"/><rect x="1434.7" y="383.6" width="12.6" height="12.6" fill="none" stroke="#fff" stroke-width="1.3"/><rect x="1190.5" y="356.3" width="12.6" height="12.6" fill="none" stroke="#fff" stroke-width="1.3"/><rect x="1189.1" y="328.3" width="12.6" height="12.6" fill="none" stroke="#fff" stroke-width="1.3"/><rect x="1186.8" y="302.1" width="12.6" height="12.6" fill="none" stroke="#fff" stroke-width="1.3"/><rect x="1185.2" y="274.7" width="12.6" height="12.6" fill="none" stroke="#fff" stroke-width="1.3"/><rect x="1182.7" y="244.6" width="12.6" height="12.6" fill="none" stroke="#fff" stroke-width="1.3"/><rect x="1168.2" y="412.2" width="12.6" height="12.6" fill="none" stroke="#fff" stroke-width="1.3"/><rect x="1144.8" y="440.3" width="12.6" height="12.6" fill="none" stroke="#fff" stroke-width="1.3"/><rect x="1121.7" y="466.3" width="12.6" height="12.6" fill="none" stroke="#fff" stroke-width="1.3"/><rect x="1097.7" y="492.7" width="12.6" height="12.6" fill="none" stroke="#fff" stroke-width="1.3"/><rect x="1071.7" y="522.8" width="12.6" height="12.6" fill="none" stroke="#fff" stroke-width="1.3"/><rect x="1180.7" y="385.2" width="12.6" height="12.6" fill="none" stroke="#fff" stroke-width="1.3"/><rect x="1167.6" y="385.2" width="12.6" height="12.6" fill="none" stroke="#fff" stroke-width="1.3"/><rect x="1154.3" y="385.2" width="12.6" height="12.6" fill="none" stroke="#fff" stroke-width="1.3"/><rect x="1140.9" y="385.2" width="12.6" height="12.6" fill="none" stroke="#fff" stroke-width="1.3"/><rect x="1127.6" y="385.2" width="12.6" height="12.6" fill="none" stroke="#fff" stroke-width="1.3"/><rect x="1194.8" y="403.0" width="12.6" height="12.6" fill="none" stroke="#fff" stroke-width="1.3"/><rect x="1195.8" y="422.2" width="12.6" height="12.6" fill="none" stroke="#fff" stroke-width="1.3"/><rect x="1195.8" y="437.2" width="12.6" height="12.6" fill="none" stroke="#fff" stroke-width="1.3"/><rect x="1197.3" y="455.2" width="12.6" height="12.6" fill="none" stroke="#fff" stroke-width="1.3"/><rect x="1198.3" y="474.7" width="12.6" height="12.6" fill="none" stroke="#fff" stroke-width="1.3"/><rect x="1208.7" y="365.7" width="12.6" height="12.6" fill="none" stroke="#fff" stroke-width="1.3"/><rect x="1224.5" y="346.3" width="12.6" height="12.6" fill="none" stroke="#fff" stroke-width="1.3"/><rect x="1240.2" y="329.5" width="12.6" height="12.6" fill="none" stroke="#fff" stroke-width="1.3"/><rect x="1254.6" y="313.3" width="12.6" height="12.6" fill="none" stroke="#fff" stroke-width="1.3"/><rect x="1271.6" y="293.5" width="12.6" height="12.6" fill="none" stroke="#fff" stroke-width="1.3"/><ellipse cx="1238.5" cy="389.1" rx="4.2" ry="3.55" fill="#bfa1a1" stroke="#000" stroke-width="1.1"/><ellipse cx="1285.3" cy="385.0" rx="4.2" ry="3.55" fill="#bf8282" stroke="#000" stroke-width="1.1"/><ellipse cx="1331.3" cy="382.9" rx="4.2" ry="3.55" fill="#bf6363" stroke="#000" stroke-width="1.1"/><ellipse cx="1384.4" cy="381.4" rx="4.2" ry="3.55" fill="#bf4545" stroke="#000" stroke-width="1.1"/><ellipse cx="1435.5" cy="377.9" rx="4.2" ry="3.55" fill="#bf0000" stroke="#000" stroke-width="1.1"/><ellipse cx="1201.9" cy="359.8" rx="4.2" ry="3.55" fill="#a1bfa1" stroke="#000" stroke-width="1.1"/><ellipse cx="1204.6" cy="329.9" rx="4.2" ry="3.55" fill="#82bf82" stroke="#000" stroke-width="1.1"/><ellipse cx="1208.5" cy="299.8" rx="4.2" ry="3.55" fill="#63bf63" stroke="#000" stroke-width="1.1"/><ellipse cx="1211.5" cy="269.9" rx="4.2" ry="3.55" fill="#45bf45" stroke="#000" stroke-width="1.1"/><ellipse cx="1215.6" cy="238.0" rx="4.2" ry="3.55" fill="#00bf00" stroke="#000" stroke-width="1.1"/><ellipse cx="1173.5" cy="422.4" rx="4.2" ry="3.55" fill="#a1a1bf" stroke="#000" stroke-width="1.1"/><ellipse cx="1148.3" cy="451.9" rx="4.2" ry="3.55" fill="#8282bf" stroke="#000" stroke-width="1.1"/><ellipse cx="1126.4" cy="481.0" rx="4.2" ry="3.55" fill="#6363bf" stroke="#000" stroke-width="1.1"/><ellipse cx="1102.6" cy="510.9" rx="4.2" ry="3.55" fill="#4545bf" stroke="#000" stroke-width="1.1"/><ellipse cx="1080.5" cy="538.5" rx="4.2" ry="3.55" fill="#0000bf" stroke="#000" stroke-width="1.1"/><ellipse cx="1187.4" cy="392.5" rx="4.2" ry="3.55" fill="#a1bfbf" stroke="#000" stroke-width="1.1"/><ellipse cx="1177.2" cy="392.5" rx="4.2" ry="3.55" fill="#82bfbf" stroke="#000" stroke-width="1.1"/><ellipse cx="1166.5" cy="392.5" rx="4.2" ry="3.55" fill="#63bfbf" stroke="#000" stroke-width="1.1"/><ellipse cx="1156.3" cy="393.5" rx="4.2" ry="3.55" fill="#45bfbf" stroke="#000" stroke-width="1.1"/><ellipse cx="1146.0" cy="393.5" rx="4.2" ry="3.55" fill="#00bfbf" stroke="#000" stroke-width="1.1"/><ellipse cx="1196.4" cy="410.5" rx="4.2" ry="3.55" fill="#bfa1bf" stroke="#000" stroke-width="1.1"/><ellipse cx="1191.5" cy="432.0" rx="4.2" ry="3.55" fill="#bf82bf" stroke="#000" stroke-width="1.1"/><ellipse cx="1191.3" cy="449.8" rx="4.2" ry="3.55" fill="#bf63bf" stroke="#000" stroke-width="1.1"/><ellipse cx="1189.0" cy="469.9" rx="4.2" ry="3.55" fill="#bf45bf" stroke="#000" stroke-width="1.1"/><ellipse cx="1186.4" cy="490.6" rx="4.2" ry="3.55" fill="#bf00bf" stroke="#000" stroke-width="1.1"/><ellipse cx="1213.4" cy="371.0" rx="4.2" ry="3.55" fill="#bfbfa1" stroke="#000" stroke-width="1.1"/><ellipse cx="1232.0" cy="348.1" rx="4.2" ry="3.55" fill="#bfbf82" stroke="#000" stroke-width="1.1"/><ellipse cx="1249.0" cy="326.2" rx="4.2" ry="3.55" fill="#bfbf63" stroke="#000" stroke-width="1.1"/><ellipse cx="1265.8" cy="305.9" rx="4.2" ry="3.55" fill="#bfbf45" stroke="#000" stroke-width="1.1"/><ellipse cx="1285.4" cy="282.0" rx="4.2" ry="3.55" fill="#bfbf00" stroke="#000" stroke-width="1.1"/><rect x="1193.1" y="385.2" width="12.6" height="12.6" fill="rgba(255,255,255,.25)" stroke="#000" stroke-width="1.3"/><ellipse cx="1198.7" cy="391.0" rx="4.2" ry="3.55" fill="#fff" stroke="#000" stroke-width="1.1"/></svg>
<div class="a" style="left:1371px;top:131px;width:214px;height:167px;background:#2c2c2c"></div>
<div class="a" style="left:1373px;top:133px;width:210px;height:163px;background:#222;border:1px solid #9a9a9a"></div>
<div class="a cr r3" style="left:1374px;top:134px;width:208px;height:161px;clip-path:polygon(208.0px 161.0px,0.0px 161.0px,0.0px 0.0px,204.1px 0.0px,208.0px 3.0px)"><i style="background:linear-gradient(90deg,#529900 -0.5px,#729900 79.5px,#999900 166.5px,#998600 209.5px)"></i><i style="background:linear-gradient(90deg,#539900 -0.5px,#759900 84.5px,#999900 164.5px,#998500 209.5px)"></i><i style="background:linear-gradient(90deg,#549900 -0.5px,#6d9900 63.5px,#999900 161.5px,#998400 209.5px)"></i><i style="background:linear-gradient(90deg,#549900 -0.5px,#799900 89.5px,#999900 158.5px,#998400 209.5px)"></i><i style="background:linear-gradient(90deg,#559900 -0.5px,#769900 80.5px,#999900 155.5px,#998300 209.5px)"></i><i style="background:linear-gradient(90deg,#569900 -0.5px,#739900 71.5px,#999900 153.5px,#998200 209.5px)"></i><i style="background:linear-gradient(90deg,#579900 -0.5px,#779900 78.5px,#999900 151.5px,#998100 209.5px)"></i><i style="background:linear-gradient(90deg,#579901 -0.5px,#779900 76.5px,#999900 148.5px,#998000 209.5px)"></i><i style="background:linear-gradient(90deg,#589901 -0.5px,#749900 67.5px,#999900 146.5px,#997f00 209.5px)"></i><i style="background:linear-gradient(90deg,#599902 -0.5px,#789900 74.5px,#999900 144.5px,#997e00 209.5px)"></i><i style="background:linear-gradient(90deg,#5a9902 -0.5px,#759900 65.5px,#999900 141.5px,#997d00 209.5px)"></i><i style="background:linear-gradient(90deg,#5a9903 -0.5px,#659900 24.5px,#999900 139.5px,#997c00 209.5px)"></i><i style="background:linear-gradient(90deg,#5b9903 -0.5px,#689900 29.5px,#999900 137.5px,#997b00 209.5px)"></i><i style="background:linear-gradient(90deg,#5c9904 -0.5px,#6b9900 34.5px,#999900 134.5px,#997a00 209.5px)"></i><i style="background:linear-gradient(90deg,#5d9904 -0.5px,#6e9900 39.5px,#999900 132.5px,#997900 209.5px)"></i><i style="background:linear-gradient(90deg,#5e9905 -0.5px,#709900 43.5px,#999900 130.5px,#998500 174.5px,#997900 209.5px)"></i><i style="background:linear-gradient(90deg,#5e9905 -0.5px,#739900 48.5px,#999900 127.5px,#997800 209.5px)"></i><i style="background:linear-gradient(90deg,#5f9906 -0.5px,#779900 53.5px,#999900 125.5px,#998a00 157.5px,#997700 209.5px)"></i><i style="background:linear-gradient(90deg,#609906 -0.5px,#7a9900 58.5px,#999900 123.5px,#998900 157.5px,#997600 209.5px)"></i><i style="background:linear-gradient(90deg,#619907 -0.5px,#7d9900 63.5px,#999900 120.5px,#998800 157.5px,#997500 209.5px)"></i><i style="background:linear-gradient(90deg,#629907 -0.5px,#819900 68.5px,#999900 118.5px,#998900 152.5px,#997400 209.5px)"></i><i style="background:linear-gradient(90deg,#629908 -0.5px,#849900 73.5px,#999900 116.5px,#998800 152.5px,#997300 209.5px)"></i><i style="background:linear-gradient(90deg,#639908 -0.5px,#879900 78.5px,#999900 113.5px,#998700 152.5px,#997200 209.5px)"></i><i style="background:linear-gradient(90deg,#649909 -0.5px,#8b9900 83.5px,#999900 111.5px,#997e00 172.5px,#997200 209.5px)"></i><i style="background:linear-gradient(90deg,#659909 -0.5px,#999900 109.5px,#998700 147.5px,#997100 209.5px)"></i><i style="background:linear-gradient(90deg,#66990a -0.5px,#999900 106.5px,#997e00 167.5px,#997000 209.5px)"></i><i style="background:linear-gradient(90deg,#67990a -0.5px,#999900 104.5px,#998200 154.5px,#996f00 209.5px)"></i><i style="background:linear-gradient(90deg,#68990b -0.5px,#999901 102.5px,#998100 154.5px,#996e00 209.5px)"></i><i style="background:linear-gradient(90deg,#69990b -0.5px,#999901 99.5px,#998200 149.5px,#996d00 209.5px)"></i><i style="background:linear-gradient(90deg,#69990c -0.5px,#999902 97.5px,#998100 149.5px,#996c00 209.5px)"></i><i style="background:linear-gradient(90deg,#6a990d -0.5px,#999903 95.5px,#998000 149.5px,#996c00 209.5px)"></i><i style="background:linear-gradient(90deg,#6b990d -0.5px,#999904 92.5px,#997f00 149.5px,#996b00 209.5px)"></i><i style="background:linear-gradient(90deg,#6c990e -0.5px,#999905 90.5px,#997e00 149.5px,#996a00 209.5px)"></i><i style="background:linear-gradient(90deg,#6d990e -0.5px,#999905 88.5px,#997d00 149.5px,#996900 209.5px)"></i><i style="background:linear-gradient(90deg,#6e990f -0.5px,#999906 85.5px,#997e00 144.5px,#996800 209.5px)"></i><i style="background:linear-gradient(90deg,#6f990f -0.5px,#999907 83.5px,#997d00 144.5px,#996700 209.5px)"></i><i style="background:linear-gradient(90deg,#709910 -0.5px,#999908 80.5px,#997c01 144.5px,#996700 209.5px)"></i><i style="background:linear-gradient(90deg,#719911 -0.5px,#999909 78.5px,#997b01 144.5px,#996600 209.5px)"></i><i style="background:linear-gradient(90deg,#729911 -0.5px,#999909 76.5px,#997a02 144.5px,#996500 209.5px)"></i><i style="background:linear-gradient(90deg,#739912 -0.5px,#99990a 73.5px,#997b03 139.5px,#997400 160.5px,#996400 209.5px)"></i><i style="background:linear-gradient(90deg,#749912 -0.5px,#99990b 71.5px,#997a03 139.5px,#996300 209.5px)"></i><i style="background:linear-gradient(90deg,#759913 -0.5px,#99990c 69.5px,#997903 139.5px,#996300 209.5px)"></i><i style="background:linear-gradient(90deg,#769914 -0.5px,#99990d 66.5px,#997d05 126.5px,#996c00 175.5px,#996200 209.5px)"></i><i style="background:linear-gradient(90deg,#779914 -0.5px,#99990e 64.5px,#997c06 126.5px,#996a00 179.5px,#996100 209.5px)"></i><i style="background:linear-gradient(90deg,#789915 -0.5px,#99990f 62.5px,#997b06 126.5px,#996000 209.5px)"></i><i style="background:linear-gradient(90deg,#799916 -0.5px,#999910 59.5px,#997a07 126.5px,#995f00 209.5px)"></i><i style="background:linear-gradient(90deg,#7a9916 -0.5px,#999910 57.5px,#997907 126.5px,#995f00 209.5px)"></i><i style="background:linear-gradient(90deg,#7b9917 -0.5px,#999911 55.5px,#997808 126.5px,#995e00 209.5px)"></i><i style="background:linear-gradient(90deg,#7c9918 -0.5px,#999912 52.5px,#997708 126.5px,#995d00 209.5px)"></i><i style="background:linear-gradient(90deg,#7e9918 -0.5px,#999913 50.5px,#997608 126.5px,#995c00 209.5px)"></i><i style="background:linear-gradient(90deg,#7f9919 -0.5px,#999914 48.5px,#99770a 121.5px,#995c01 209.5px)"></i><i style="background:linear-gradient(90deg,#80991a -0.5px,#999915 45.5px,#99790b 113.5px,#995b01 209.5px)"></i><i style="background:linear-gradient(90deg,#81991a -0.5px,#999916 43.5px,#99780b 113.5px,#995a02 209.5px)"></i><i style="background:linear-gradient(90deg,#82991b -0.5px,#999917 41.5px,#99770c 113.5px,#995902 209.5px)"></i></div>
<div class="a cr r3" style="left:1374px;top:134px;width:208px;height:161px;clip-path:polygon(0.0px 161.0px,208.0px 161.0px,208.0px 142.8px,0.0px 15.4px)"><i></i><i></i><i></i><i></i><i></i><i style="background:linear-gradient(90deg,#8fff00 -0.5px,#94ff00 7.5px)"></i><i style="background:linear-gradient(90deg,#90ff01 -0.5px,#99ff00 12.5px)"></i><i style="background:linear-gradient(90deg,#92ff02 -0.5px,#9eff00 17.5px)"></i><i style="background:linear-gradient(90deg,#93ff02 -0.5px,#a2ff00 21.5px)"></i><i style="background:linear-gradient(90deg,#94ff03 -0.5px,#a6ff00 26.5px)"></i><i style="background:linear-gradient(90deg,#95ff04 -0.5px,#abff00 31.5px)"></i><i style="background:linear-gradient(90deg,#97ff05 -0.5px,#b0ff00 36.5px)"></i><i style="background:linear-gradient(90deg,#98ff05 -0.5px,#b5ff00 41.5px)"></i><i style="background:linear-gradient(90deg,#99ff06 -0.5px,#baff00 46.5px)"></i><i style="background:linear-gradient(90deg,#9bff07 -0.5px,#c0ff00 51.5px)"></i><i style="background:linear-gradient(90deg,#9cff08 -0.5px,#c5ff00 56.5px)"></i><i style="background:linear-gradient(90deg,#9dff09 -0.5px,#caff00 61.5px)"></i><i style="background:linear-gradient(90deg,#9fff09 -0.5px,#d0ff00 66.5px)"></i><i style="background:linear-gradient(90deg,#a0ff0a -0.5px,#d4ff00 70.5px)"></i><i style="background:linear-gradient(90deg,#a1ff0b -0.5px,#daff00 75.5px)"></i><i style="background:linear-gradient(90deg,#a3ff0c -0.5px,#e0ff00 80.5px)"></i><i style="background:linear-gradient(90deg,#a4ff0d -0.5px,#e5ff00 85.5px)"></i><i style="background:linear-gradient(90deg,#a5ff0e -0.5px,#ebff00 90.5px)"></i><i style="background:linear-gradient(90deg,#a7ff0f -0.5px,#f1ff00 95.5px)"></i><i style="background:linear-gradient(90deg,#a8ff0f -0.5px,#f7ff00 100.5px)"></i><i style="background:linear-gradient(90deg,#aaff10 -0.5px,#cdff09 46.5px,#feff00 105.5px)"></i><i style="background:linear-gradient(90deg,#abff11 -0.5px,#ffff00 104.5px,#fffa00 110.5px)"></i><i style="background:linear-gradient(90deg,#adff12 -0.5px,#ceff0b 43.5px,#ffff01 102.5px,#fff400 115.5px)"></i><i style="background:linear-gradient(90deg,#aeff13 -0.5px,#ffff02 100.5px,#ffef00 119.5px)"></i><i style="background:linear-gradient(90deg,#b0ff14 -0.5px,#d7ff0c 50.5px,#ffff04 97.5px,#ffea00 124.5px)"></i><i style="background:linear-gradient(90deg,#b1ff15 -0.5px,#ffff05 95.5px,#ffe400 129.5px)"></i><i style="background:linear-gradient(90deg,#b3ff16 -0.5px,#feff06 91.5px,#ffdf00 134.5px)"></i><i style="background:linear-gradient(90deg,#b4ff17 -0.5px,#ffff08 90.5px,#ffd900 139.5px)"></i><i style="background:linear-gradient(90deg,#b6ff18 -0.5px,#ffff09 88.5px,#ffd400 144.5px)"></i><i style="background:linear-gradient(90deg,#b8ff19 -0.5px,#ffff0a 86.5px,#ffe003 124.5px,#ffd000 149.5px)"></i><i style="background:linear-gradient(90deg,#b9ff1a -0.5px,#ffff0c 83.5px,#ffdf04 123.5px,#ffcb00 154.5px)"></i><i style="background:linear-gradient(90deg,#bbff1b -0.5px,#ffff0d 81.5px,#ffe306 115.5px,#ffc600 159.5px)"></i><i style="background:linear-gradient(90deg,#bcff1c -0.5px,#ffff0e 79.5px,#ffdf06 118.5px,#ffc200 163.5px)"></i><i style="background:linear-gradient(90deg,#beff1d -0.5px,#ffff10 76.5px,#ffd906 124.5px,#ffbe00 168.5px)"></i><i style="background:linear-gradient(90deg,#c0ff1e -0.5px,#ffff11 74.5px,#ffda08 120.5px,#ffb900 173.5px)"></i><i style="background:linear-gradient(90deg,#c1ff1f -0.5px,#ffff13 71.5px,#ffd909 119.5px,#ffb500 178.5px)"></i><i style="background:linear-gradient(90deg,#c3ff20 -0.5px,#ffff14 69.5px,#ffda0a 115.5px,#ffb100 183.5px)"></i><i style="background:linear-gradient(90deg,#c5ff21 -0.5px,#ffff16 67.5px,#ffd90b 114.5px,#ffad00 188.5px)"></i><i style="background:linear-gradient(90deg,#c7ff22 -0.5px,#ffff17 64.5px,#ffd10a 123.5px,#ffa900 193.5px)"></i><i style="background:linear-gradient(90deg,#c8ff23 -0.5px,#ffff19 62.5px,#ffe411 94.5px,#ffcc0a 128.5px,#ffa600 198.5px)"></i><i style="background:linear-gradient(90deg,#caff24 -0.5px,#ffff1a 60.5px,#ffe613 89.5px,#ffcb0b 127.5px,#ffa200 203.5px)"></i><i style="background:linear-gradient(90deg,#ccff25 -0.5px,#ffff1c 57.5px,#ffe113 93.5px,#ffca0c 126.5px,#ffb305 165.5px,#ff9e00 208.5px)"></i><i style="background:linear-gradient(90deg,#ceff26 -0.5px,#ffff1d 55.5px,#ffe616 84.5px,#ffc90d 125.5px,#ffb005 168.5px,#ff9d00 209.5px)"></i><i style="background:linear-gradient(90deg,#cfff28 -0.5px,#ffff1f 53.5px,#ffde15 92.5px,#ffc80e 124.5px,#ffae06 169.5px,#ff9b00 209.5px)"></i><i style="background:linear-gradient(90deg,#d1ff29 -0.5px,#ffff20 50.5px,#ffe318 83.5px,#ffc50e 126.5px,#ffab06 172.5px,#ff9a01 209.5px)"></i><i style="background:linear-gradient(90deg,#d3ff2a -0.5px,#ffff22 48.5px,#ffe51a 78.5px,#ffc40f 125.5px,#ffb209 156.5px,#ff9901 209.5px)"></i><i style="background:linear-gradient(90deg,#d5ff2b -0.5px,#ffff23 46.5px,#ffe71c 73.5px,#ffca12 113.5px,#ffb00a 157.5px,#ff9702 209.5px)"></i><i style="background:linear-gradient(90deg,#d7ff2c -0.5px,#ffff25 43.5px,#ffe21c 77.5px,#ffc211 123.5px,#ffae0b 158.5px,#ff9603 209.5px)"></i><i style="background:linear-gradient(90deg,#d9ff2e -0.5px,#ffff27 41.5px,#ffe01c 77.5px,#ffc614 114.5px,#ffac0b 159.5px,#ff9503 209.5px)"></i></div>
<svg class="a" style="left:1374px;top:134px" width="208" height="161" viewBox="1374 134 208 161"><rect x="1470.5" y="208.0" width="12.6" height="12.6" fill="none" stroke="#fff" stroke-width="1.3"/><rect x="1410.5" y="284.0" width="12.6" height="12.6" fill="none" stroke="#fff" stroke-width="1.3"/><ellipse cx="1505.4" cy="143.4" rx="4.2" ry="3.55" fill="#bfbf00" stroke="#000" stroke-width="1.1"/><ellipse cx="1433.8" cy="237.9" rx="4.2" ry="3.55" fill="#bfbf45" stroke="#000" stroke-width="1.1"/></svg>
<!-- sec_bottom -->
<div class="t" style="left:14.60px;top:622.54px;font-size:25px;transform:scaleX(1.1394);transform-origin:0 0;color:#f2f2f2;">Current Reading</div>
<div class="t" style="left:14.60px;top:663.38px;font-size:22px;transform:scaleX(1.0816);transform-origin:0 0;color:#f2f2f2;">x: 0.4297</div>
<div class="t" style="left:14.60px;top:698.98px;font-size:22px;transform:scaleX(1.0816);transform-origin:0 0;color:#f2f2f2;">y: 0.5391</div>
<div class="t" style="left:14.60px;top:733.88px;font-size:22px;transform:scaleX(1.0768);transform-origin:0 0;color:#f2f2f2;">fL: 41.76</div>
<div class="t" style="left:14.60px;top:770.28px;font-size:22px;transform:scaleX(1.1263);transform-origin:0 0;color:#f2f2f2;">cd/m²: 143.09</div>
<div class="t" style="left:407.42px;top:610.74px;font-size:13.3px;color:#dcdcdc;">RGB Balance</div>
<div class="a" style="left:339.7px;top:625px;width:242.6px;height:160.5px;background:#222"></div>
<div class="a" style="left:334px;top:657px;width:248.3px;height:1.2px;background:#8c8c8c"></div>
<div class="t" style="left:319.60px;top:651.12px;font-size:12.5px;color:#dcdcdc;">50</div>
<div class="a" style="left:334px;top:706px;width:248.3px;height:1.2px;background:#8c8c8c"></div>
<div class="t" style="left:326.55px;top:700.62px;font-size:12.5px;color:#dcdcdc;">0</div>
<div class="a" style="left:334px;top:756px;width:248.3px;height:1.2px;background:#8c8c8c"></div>
<div class="t" style="left:315.43px;top:750.12px;font-size:12.5px;color:#dcdcdc;">-50</div>
<div class="a" style="left:339.2px;top:625px;width:1.2px;height:165px;background:#9a9a9a"></div>
<div class="a" style="left:581.6px;top:625px;width:1.2px;height:165px;background:#9a9a9a"></div>
<div class="a" style="left:339.2px;top:624.5px;width:243.6px;height:1.2px;background:#9a9a9a"></div>
<div class="a" style="left:339.2px;top:785px;width:243.6px;height:1.2px;background:#9a9a9a"></div>
<div class="a" style="left:363.3px;top:706.8px;width:65px;height:5px;background:linear-gradient(180deg,#ff2020,#e00000);border:1px solid #000;border-top:none"></div>
<div class="a" style="left:429.3px;top:702px;width:64.3px;height:4.6px;background:linear-gradient(180deg,#20a020,#107010);border:1px solid #000;border-bottom:none"></div>
<div class="a" style="left:494.2px;top:706.4px;width:64.6px;height:78.6px;background:linear-gradient(180deg,#5c5cff 0,#2424ff 12%,#0000ff 30%,#0000f0 58%,#000098 88%,#000070 100%);border:1px solid #000;border-top:none"></div>
<div class="t" style="left:443.80px;top:788.04px;font-size:13.3px;color:#dcdcdc;">100%</div>
<div class="a" style="left:603px;top:606px;width:691px;height:27px;background:linear-gradient(180deg,#3e3e3e 0,#323232 47%,#141414 50%,#1c1c1c 100%)"></div>
<div class="a" style="left:603px;top:606px;width:19px;height:27px;background:#000"></div>
<div class="t" style="left:781.40px;top:612.08px;font-size:15.5px;transform:scaleX(1.2200);transform-origin:0 0;color:#fff;">20%</div>
<div class="t" style="left:884.80px;top:612.08px;font-size:15.5px;transform:scaleX(1.2200);transform-origin:0 0;color:#fff;">40%</div>
<div class="t" style="left:988.60px;top:612.08px;font-size:15.5px;transform:scaleX(1.2200);transform-origin:0 0;color:#fff;">60%</div>
<div class="t" style="left:1092.40px;top:612.08px;font-size:15.5px;transform:scaleX(1.2200);transform-origin:0 0;color:#fff;">80%</div>
<div class="t" style="left:1196.30px;top:612.08px;font-size:15.5px;transform:scaleX(1.2200);transform-origin:0 0;color:#fff;">100%</div>
<div class="a" style="left:622px;top:633.0px;width:672px;height:25.1px;background:#444"></div>
<div class="a" style="left:603px;top:633.0px;width:19px;height:25.1px;background:linear-gradient(180deg,#333,#262626);border-bottom:1px solid #222"></div>
<div class="t" style="left:628.30px;top:637.43px;font-size:16.5px;transform:scaleX(1.2011);transform-origin:0 0;color:#f4f4f4;">x: CIE31</div>
<div class="t" style="left:781.40px;top:637.43px;font-size:16.5px;transform:scaleX(1.2999);transform-origin:0 0;color:#f4f4f4;">0.3335</div>
<div class="t" style="left:884.80px;top:637.43px;font-size:16.5px;transform:scaleX(1.2999);transform-origin:0 0;color:#f4f4f4;">0.3580</div>
<div class="t" style="left:988.60px;top:637.43px;font-size:16.5px;transform:scaleX(1.3322);transform-origin:0 0;color:#f4f4f4;">0.3811</div>
<div class="t" style="left:1092.40px;top:637.43px;font-size:16.5px;transform:scaleX(1.2999);transform-origin:0 0;color:#f4f4f4;">0.4032</div>
<div class="t" style="left:1196.30px;top:637.43px;font-size:16.5px;transform:scaleX(1.2999);transform-origin:0 0;color:#f4f4f4;">0.4297</div>
<div class="a" style="left:622px;top:658.0px;width:672px;height:25.1px;background:#7f7f7f"></div>
<div class="a" style="left:603px;top:658.0px;width:19px;height:25.1px;background:linear-gradient(180deg,#333,#262626);border-bottom:1px solid #222"></div>
<div class="t" style="left:628.30px;top:662.46px;font-size:16.5px;transform:scaleX(1.2248);transform-origin:0 0;color:#f4f4f4;">y: CIE31</div>
<div class="t" style="left:781.40px;top:662.46px;font-size:16.5px;transform:scaleX(1.2999);transform-origin:0 0;color:#f4f4f4;">0.3682</div>
<div class="t" style="left:884.80px;top:662.46px;font-size:16.5px;transform:scaleX(1.3322);transform-origin:0 0;color:#f4f4f4;">0.4110</div>
<div class="t" style="left:988.60px;top:662.46px;font-size:16.5px;transform:scaleX(1.2999);transform-origin:0 0;color:#f4f4f4;">0.4524</div>
<div class="t" style="left:1092.40px;top:662.46px;font-size:16.5px;transform:scaleX(1.2999);transform-origin:0 0;color:#f4f4f4;">0.4935</div>
<div class="t" style="left:1196.30px;top:662.46px;font-size:16.5px;transform:scaleX(1.2999);transform-origin:0 0;color:#f4f4f4;">0.5391</div>
<div class="a" style="left:622px;top:683.1px;width:672px;height:25.1px;background:#444"></div>
<div class="a" style="left:603px;top:683.1px;width:19px;height:25.1px;background:linear-gradient(180deg,#333,#262626);border-bottom:1px solid #222"></div>
<div class="t" style="left:628.30px;top:687.49px;font-size:16.5px;transform:scaleX(1.1358);transform-origin:0 0;color:#f4f4f4;">Y</div>
<div class="t" style="left:781.40px;top:687.49px;font-size:16.5px;transform:scaleX(1.3078);transform-origin:0 0;color:#f4f4f4;">151.8105</div>
<div class="t" style="left:884.80px;top:687.49px;font-size:16.5px;transform:scaleX(1.3078);transform-origin:0 0;color:#f4f4f4;">149.9225</div>
<div class="t" style="left:988.60px;top:687.49px;font-size:16.5px;transform:scaleX(1.3078);transform-origin:0 0;color:#f4f4f4;">146.6336</div>
<div class="t" style="left:1092.40px;top:687.49px;font-size:16.5px;transform:scaleX(1.3078);transform-origin:0 0;color:#f4f4f4;">146.5078</div>
<div class="t" style="left:1196.30px;top:687.49px;font-size:16.5px;transform:scaleX(1.3078);transform-origin:0 0;color:#f4f4f4;">143.0897</div>
<div class="a" style="left:622px;top:708.1px;width:672px;height:25.1px;background:#7f7f7f"></div>
<div class="a" style="left:603px;top:708.1px;width:19px;height:25.1px;background:linear-gradient(180deg,#333,#262626);border-bottom:1px solid #222"></div>
<div class="t" style="left:628.30px;top:712.52px;font-size:16.5px;transform:scaleX(1.2691);transform-origin:0 0;color:#f4f4f4;">Target x:CIE31</div>
<div class="t" style="left:781.40px;top:712.52px;font-size:16.5px;transform:scaleX(1.2999);transform-origin:0 0;color:#f4f4f4;">0.3344</div>
<div class="t" style="left:884.80px;top:712.52px;font-size:16.5px;transform:scaleX(1.2999);transform-origin:0 0;color:#f4f4f4;">0.3564</div>
<div class="t" style="left:988.60px;top:712.52px;font-size:16.5px;transform:scaleX(1.2999);transform-origin:0 0;color:#f4f4f4;">0.3773</div>
<div class="t" style="left:1092.40px;top:712.52px;font-size:16.5px;transform:scaleX(1.2999);transform-origin:0 0;color:#f4f4f4;">0.3969</div>
<div class="t" style="left:1196.30px;top:712.52px;font-size:16.5px;transform:scaleX(1.2999);transform-origin:0 0;color:#f4f4f4;">0.4193</div>
<div class="a" style="left:622px;top:733.1px;width:672px;height:25.1px;background:#444"></div>
<div class="a" style="left:603px;top:733.1px;width:19px;height:25.1px;background:linear-gradient(180deg,#333,#262626);border-bottom:1px solid #222"></div>
<div class="t" style="left:628.30px;top:737.55px;font-size:16.5px;transform:scaleX(1.2828);transform-origin:0 0;color:#f4f4f4;">Target y:CIE31</div>
<div class="t" style="left:781.40px;top:737.55px;font-size:16.5px;transform:scaleX(1.2999);transform-origin:0 0;color:#f4f4f4;">0.3648</div>
<div class="t" style="left:884.80px;top:737.55px;font-size:16.5px;transform:scaleX(1.2999);transform-origin:0 0;color:#f4f4f4;">0.4013</div>
<div class="t" style="left:988.60px;top:737.55px;font-size:16.5px;transform:scaleX(1.2999);transform-origin:0 0;color:#f4f4f4;">0.4358</div>
<div class="t" style="left:1092.40px;top:737.55px;font-size:16.5px;transform:scaleX(1.2999);transform-origin:0 0;color:#f4f4f4;">0.4682</div>
<div class="t" style="left:1196.30px;top:737.55px;font-size:16.5px;transform:scaleX(1.2999);transform-origin:0 0;color:#f4f4f4;">0.5053</div>
<div class="a" style="left:622px;top:758.1px;width:672px;height:25.1px;background:#7f7f7f"></div>
<div class="a" style="left:603px;top:758.1px;width:19px;height:25.1px;background:linear-gradient(180deg,#333,#262626);border-bottom:1px solid #222"></div>
<div class="t" style="left:628.30px;top:762.58px;font-size:16.5px;transform:scaleX(1.2674);transform-origin:0 0;color:#f4f4f4;">Target Y</div>
<div class="t" style="left:781.40px;top:762.58px;font-size:16.5px;transform:scaleX(1.3078);transform-origin:0 0;color:#f4f4f4;">149.6468</div>
<div class="t" style="left:884.80px;top:762.58px;font-size:16.5px;transform:scaleX(1.3078);transform-origin:0 0;color:#f4f4f4;">147.0200</div>
<div class="t" style="left:988.60px;top:762.58px;font-size:16.5px;transform:scaleX(1.3078);transform-origin:0 0;color:#f4f4f4;">145.0018</div>
<div class="t" style="left:1092.40px;top:762.58px;font-size:16.5px;transform:scaleX(1.3078);transform-origin:0 0;color:#f4f4f4;">143.4178</div>
<div class="t" style="left:1196.30px;top:762.58px;font-size:16.5px;transform:scaleX(1.3078);transform-origin:0 0;color:#f4f4f4;">141.8865</div>
<!-- sec_footer -->
<svg width="0" height="0" class="a"><defs><linearGradient id="fbg" x1="0" y1="0" x2="0" y2="1"><stop offset="0" stop-color="#727272"/><stop offset="1" stop-color="#a6a6a6"/></linearGradient></defs></svg>
<div class="a" style="left:0px;top:807.5px;width:1600px;height:62.5px;background:linear-gradient(180deg,#4a4a4a,#2a2a2a)"></div>
<div class="a" style="left:0px;top:806.3px;width:811px;height:63.7px;background:#2a2a2a"></div>
<div class="a" style="left:1.3px;top:808px;width:44.7px;height:60.5px;background:linear-gradient(180deg,#a8a8a8 0,#8e8e8e 35%,#7a7a7a 70%,#666 100%);border-radius:4px"></div>
<svg class="a" style="left:15.1px;top:808.9px" width="16.8" height="16.8" viewBox="-8.4 -8.4 16.8 16.8"><circle r="7.4" fill="url(#fbg)"/><path d="M-4.5 2.2h9l-4.5-5z" fill="#333"/></svg>
<div class="a" style="left:6.2px;top:834.2px;width:34.8px;height:29.8px;background:#ffff00;border-radius:3.5px;border:1px solid #c0c000"></div>
<div class="a" style="left:52.3px;top:808px;width:149.3px;height:60.5px;background:linear-gradient(180deg,#a8a8a8 0,#8e8e8e 35%,#7a7a7a 70%,#666 100%);border-radius:4px"></div>
<div class="a" style="left:57.8px;top:813.4px;width:139.6px;height:35.6px;background:#c0c1a3;border-radius:3px;border:1px solid rgba(0,0,0,.22)"></div>
<div class="t" style="left:116.40px;top:855.48px;font-size:10.3px;color:#2e2e2e;">20%</div>
<div class="a" style="left:204.1px;top:808px;width:149.3px;height:60.5px;background:linear-gradient(180deg,#a8a8a8 0,#8e8e8e 35%,#7a7a7a 70%,#666 100%);border-radius:4px"></div>
<div class="a" style="left:209.6px;top:813.4px;width:139.6px;height:35.6px;background:#c0c287;border-radius:3px;border:1px solid rgba(0,0,0,.22)"></div>
<div class="t" style="left:268.25px;top:855.48px;font-size:10.3px;color:#2e2e2e;">40%</div>
<div class="a" style="left:356.0px;top:808px;width:149.3px;height:60.5px;background:linear-gradient(180deg,#a8a8a8 0,#8e8e8e 35%,#7a7a7a 70%,#666 100%);border-radius:4px"></div>
<div class="a" style="left:361.5px;top:813.4px;width:139.6px;height:35.6px;background:#bfc062;border-radius:3px;border:1px solid rgba(0,0,0,.22)"></div>
<div class="t" style="left:420.10px;top:855.48px;font-size:10.3px;color:#2e2e2e;">60%</div>
<div class="a" style="left:507.8px;top:808px;width:149.3px;height:60.5px;background:linear-gradient(180deg,#a8a8a8 0,#8e8e8e 35%,#7a7a7a 70%,#666 100%);border-radius:4px"></div>
<div class="a" style="left:513.3px;top:813.4px;width:139.6px;height:35.6px;background:#bdc03e;border-radius:3px;border:1px solid rgba(0,0,0,.22)"></div>
<div class="t" style="left:571.95px;top:855.48px;font-size:10.3px;color:#2e2e2e;">80%</div>
<div class="a" style="left:659.7px;top:808px;width:149.3px;height:60.5px;background:#0a0a0a;border-radius:4px"></div>
<div class="a" style="left:665.2px;top:813.4px;width:139.6px;height:35.6px;background:#c3c300;border-radius:3px;border:1px solid rgba(0,0,0,.22)"></div>
<div class="t" style="left:720.93px;top:855.48px;font-size:10.3px;color:#fff;font-weight:bold;">100%</div>
<div class="a" style="left:1277px;top:808px;width:48px;height:18.6px;background:linear-gradient(180deg,#a8a8a8 0,#8e8e8e 35%,#7a7a7a 70%,#666 100%);border-radius:4px 4px 0 0"></div>
<svg class="a" style="left:1293.4px;top:808.8px" width="16" height="16" viewBox="-8 -8 16 16"><circle r="7" fill="url(#fbg)"/><path d="M-4.5 2.2h9l-4.5-5z" fill="#333"/></svg>
<div class="a" style="left:1277px;top:827.2px;width:48px;height:41.3px;background:linear-gradient(180deg,#909090,#686868);border-radius:0 0 4px 4px"></div>
<div class="a" style="left:1285.2px;top:832.2px;width:31.6px;height:31.3px;background:linear-gradient(180deg,#b8b8b8 0,#a8a8a8 50%,#7c7c7c 52%,#848484 100%);border:2.3px solid #2a2a2a;border-radius:5px"></div>
<div class="a" style="left:1294.2px;top:841.2px;width:13.5px;height:13.3px;background:linear-gradient(180deg,#222 0,#161616 49%,#000 51%)"></div>
<div class="a" style="left:1326.3px;top:808px;width:45.9px;height:29.8px;background:linear-gradient(180deg,#a8a8a8 0,#8e8e8e 35%,#7a7a7a 70%,#666 100%);border-radius:4px 4px 0 0"></div>
<svg class="a" style="left:1338.2px;top:812.0px" width="22" height="22" viewBox="-11 -11 22 22"><circle r="10" fill="url(#fbg)"/><rect x="-4" y="-4" width="8" height="8" fill="#2e2e2e"/></svg>
<div class="a" style="left:1373px;top:808px;width:44.2px;height:29.8px;background:linear-gradient(180deg,#a8a8a8 0,#8e8e8e 35%,#7a7a7a 70%,#666 100%);border-radius:4px 4px 0 0"></div>
<svg class="a" style="left:1384.1px;top:812.0px" width="22" height="22" viewBox="-11 -11 22 22"><circle r="10" fill="url(#fbg)"/><path d="M-3.5 -5v10l8-5z" fill="#2e2e2e"/></svg>
<div class="a" style="left:1418.3px;top:808px;width:43.6px;height:29.8px;background:linear-gradient(180deg,#a8a8a8 0,#8e8e8e 35%,#7a7a7a 70%,#666 100%);border-radius:4px 4px 0 0"></div>
<svg class="a" style="left:1429.1px;top:812.0px" width="22" height="22" viewBox="-11 -11 22 22"><circle r="10" fill="url(#fbg)"/><text y="3.6" font-size="10" font-weight="bold" fill="#2e2e2e" text-anchor="middle" font-family="Liberation Sans, sans-serif">[··]</text></svg>
<div class="a" style="left:1463.1px;top:808px;width:43.8px;height:29.8px;background:linear-gradient(180deg,#a8a8a8 0,#8e8e8e 35%,#7a7a7a 70%,#666 100%);border-radius:4px 4px 0 0"></div>
<svg class="a" style="left:1474.0px;top:812.0px" width="22" height="22" viewBox="-11 -11 22 22"><circle r="10" fill="url(#fbg)"/><text y="4.6" font-size="15" font-weight="bold" fill="#2e2e2e" text-anchor="middle" font-family="DejaVu Sans, sans-serif">∞</text></svg>
<div class="a" style="left:1508px;top:808px;width:44.2px;height:29.8px;background:linear-gradient(180deg,#a8a8a8 0,#8e8e8e 35%,#7a7a7a 70%,#666 100%);border-radius:4px 4px 0 0"></div>
<svg class="a" style="left:1519.1px;top:812.0px" width="22" height="22" viewBox="-11 -11 22 22"><circle r="10" fill="url(#fbg)"/><g fill="none" stroke="#2e2e2e" stroke-width="2"><path d="M-5 -1.2a5 5 0 0 1 8.6-2.4"/><path d="M5 1.2a5 5 0 0 1 -8.6 2.4"/></g><path d="M1.2 -3h5v-5z M-1.2 3h-5v5z" fill="#2e2e2e"/></svg>
<div class="a" style="left:1553px;top:808px;width:47px;height:29.8px;background:#2c2c2c;border-radius:4px 0 0 0"></div>
<svg class="a" style="left:1565px;top:811px" width="22" height="22" viewBox="-11 -11 22 22"><circle r="9.8" fill="#3a3a3a"/></svg>
<div class="a" style="left:1326.3px;top:839.2px;width:135.6px;height:29.5px;background:linear-gradient(180deg,#a8a8a8 0,#8e8e8e 35%,#7a7a7a 70%,#666 100%);border-radius:4px"></div>
<div class="a" style="left:1463.1px;top:839.2px;width:137px;height:29.5px;background:linear-gradient(180deg,#a8a8a8 0,#8e8e8e 35%,#7a7a7a 70%,#666 100%);border-radius:4px 0 0 4px"></div>
<svg class="a" style="left:1345.7px;top:842.5px" width="22" height="22" viewBox="-11 -11 22 22"><circle r="10" fill="url(#fbg)"/><path d="M-0.5 -4l-4 4l4 4M4.5 -4l-4 4l4 4" fill="none" stroke="#2e2e2e" stroke-width="1.6"/></svg>
<svg class="a" style="left:1559.2px;top:842.5px" width="22" height="22" viewBox="-11 -11 22 22"><circle r="10" fill="url(#fbg)"/><path d="M0.5 -4l4 4l-4 4M-4.5 -4l4 4l-4 4" fill="none" stroke="#2e2e2e" stroke-width="1.6"/></svg>
<div class="t" style="left:1383.70px;top:842.55px;font-size:22.5px;letter-spacing:0.120px;color:#303030;-webkit-text-stroke:0.4px #303030">Back</div>
<div class="t" style="left:1490.60px;top:842.55px;font-size:22.5px;letter-spacing:1.309px;color:#303030;-webkit-text-stroke:0.4px #303030">Next</div>
</div>
</body></html>
